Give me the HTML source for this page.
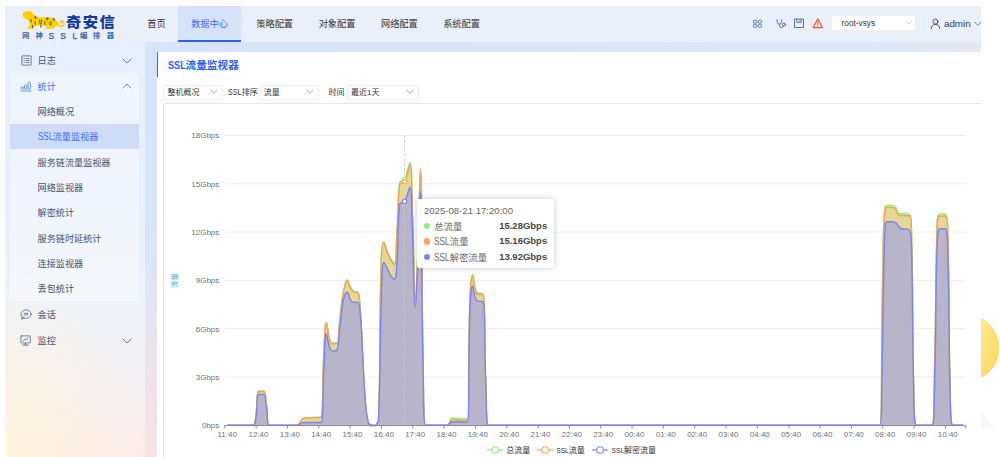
<!DOCTYPE html>
<html lang="zh-CN">
<head>
<meta charset="utf-8">
<title>SSL流量监视器</title>
<style>
html,body{margin:0;padding:0;}
body{width:1000px;height:457px;overflow:hidden;background:#fff;position:relative;
  font-family:"Liberation Sans","Noto Sans CJK SC",sans-serif;color:#333;}
*{box-sizing:border-box;}
.abs{position:absolute;}
#page{position:absolute;left:5px;top:6px;width:976px;height:451px;overflow:hidden;
  background:linear-gradient(to bottom,#d5e3fb 0%,#d8e4fa 42%,#e2e4f4 65%,#f0e2ea 82%,#f5e3e5 100%);}
/* coordinates inside #page are offset by (-5,-6) ; we use a wrapper shifted back */
#w{position:absolute;left:-5px;top:-6px;width:1000px;height:457px;}
#header{left:5px;top:6px;width:976px;height:35.7px;background:#e9f0fa;}
#sidebar{left:5px;top:41.7px;width:140.4px;height:416px;background:radial-gradient(ellipse 150px 190px at 0% 100%,rgba(255,245,222,.95) 0%,rgba(255,245,222,0) 100%),linear-gradient(to bottom,#e6effc 0%,#e9f0fc 40%,#eff3fa 66%,#f5f0f3 84%,#fbeae9 100%);}
#group{left:10.2px;top:73.2px;width:129.3px;height:228.3px;background:rgba(255,255,255,.36);}
#sel{left:10.2px;top:124.1px;width:129.3px;height:25.1px;background:#cfdcf7;}
.mi{position:absolute;left:37.6px;height:25.33px;line-height:27.6px;font-size:9.12px;color:#445170;white-space:nowrap;}
.mi.blue{color:#3a6cf0;}
.nav{position:absolute;top:6px;height:35.7px;line-height:36.6px;font-size:9.2px;color:#333;white-space:nowrap;}
#tab{left:178.2px;top:6px;width:62.4px;height:35.7px;background:#d6e2f8;border-bottom:2.1px solid #2e62e0;}
#panel{left:156.8px;top:52.2px;width:830px;height:410px;background:#fff;border-top-left-radius:3px;}
#bar{left:156.8px;top:52.2px;width:1.5px;height:25px;background:#2e62e0;border-top-left-radius:2px;}
#title{left:167.7px;top:56.6px;font-size:10.67px;font-weight:bold;color:#2f63e3;line-height:16px;white-space:nowrap;}
.sb{position:absolute;top:85px;height:14.8px;border:0.7px solid #e9eef5;border-radius:1.5px;background:#fff;}
.st{position:absolute;top:85.4px;height:14.3px;line-height:16.2px;font-size:8px;color:#333;white-space:nowrap;}
#cbox{left:163px;top:103px;width:830px;height:360px;border:0.8px solid #e4e6ea;border-radius:2px;background:#fff;}
.chart{position:absolute;left:0;top:0;}
.ax{font-size:8px;fill:#6e7079;font-family:"Liberation Sans",sans-serif;}
.cjk{font-family:"Liberation Sans","Noto Sans CJK SC",sans-serif;}
#tip{left:417.3px;top:198.7px;width:136.3px;height:69.6px;background:#fff;border-radius:3px;
  box-shadow:0 0 6px rgba(0,0,0,.22);}
#tip .d{position:absolute;left:6.6px;top:6.3px;font-size:9.6px;line-height:12px;color:#666;white-space:nowrap;}
#tip .r{position:absolute;left:0;width:100%;height:15.6px;line-height:15.6px;font-size:9.33px;color:#666;white-space:nowrap;}
#tip .dot{position:absolute;left:6.4px;top:5px;width:6.2px;height:6.2px;border-radius:50%;}
#tip .l{position:absolute;left:17px;top:1.8px;}
#tip .v{position:absolute;right:6.4px;font-weight:bold;color:#464646;font-size:9.5px;}
.lat{display:inline-block;line-height:1;transform:scale(.88,1.1);transform-origin:0 88%;margin-right:-.225em;}
.lt8{font-size:8.4px;font-weight:normal;color:#2f5aa8;-webkit-text-stroke:.25px #2f5aa8;}
#hsel{left:831.8px;top:16.1px;width:83.3px;height:13.8px;background:#fff;border-radius:2px;}
#hseltxt{left:841.5px;top:16.1px;height:13.8px;line-height:15.8px;font-size:8.3px;color:#333;}
#admin{left:943.9px;top:16.2px;line-height:16px;font-size:9.9px;color:#2f3f66;}
</style>
</head>
<body>
<div id="page"><div id="w">

<!-- header -->
<div id="header" class="abs"></div>
<div id="tab" class="abs"></div>
<div class="abs" style="left:242.1px;top:17px;width:.7px;height:10.2px;background:#dbe2ee"></div>

<!-- logo -->
<svg class="abs" style="left:18px;top:7px" width="55" height="25" viewBox="0 0 1000 455">
  <path d="M88,118 C100,98 150,78 200,70 C245,80 272,112 300,150 C340,182 400,196 470,192 C530,184 600,182 650,198 C690,232 712,270 722,300 L700,345 C670,362 648,378 640,396 L490,396 C494,376 515,360 545,350 C500,346 400,344 335,342 C305,356 294,376 290,396 L165,396 C168,372 190,352 216,346 C222,320 214,290 196,258 C178,232 160,216 150,214 C128,212 108,204 100,190 C92,170 86,140 88,118 Z" fill="#ffcf00"/>
  <path d="M700,268 C716,316 748,350 786,352 C826,352 846,318 836,290 C828,262 796,250 778,264 C768,274 772,290 786,290" fill="none" stroke="#ffcf00" stroke-width="30" stroke-linecap="round"/>
  <g fill="none" stroke="#1a3f8c" stroke-width="15">
    <ellipse cx="316" cy="190" rx="11" ry="22"/><ellipse cx="534" cy="216" rx="12" ry="24"/>
    <ellipse cx="592" cy="298" rx="16" ry="30"/><ellipse cx="652" cy="228" rx="10" ry="22"/>
    <path d="M394,228 V290 C394,306 428,306 428,290 V228"/>
    <path d="M238,222 V282 M312,262 V322 M262,326 V384 M416,318 V378 M488,258 V322"/>
  </g>
</svg>
<div class="abs" style="left:66.4px;top:11.6px;font-size:14.2px;line-height:21px;font-weight:900;color:#10399b;letter-spacing:1.35px;white-space:nowrap;transform:scaleX(1.075);transform-origin:0 0;">奇安信</div>
<div class="abs" id="sub" style="left:0;top:31px;height:10px;font-size:7.4px;line-height:10px;font-weight:700;color:#3b66b2;white-space:nowrap;">
  <span class="abs" style="left:22.1px">网</span><span class="abs" style="left:35.5px">神</span><span class="abs lt8" style="left:48.5px">S</span><span class="abs lt8" style="left:60.3px">S</span><span class="abs lt8" style="left:72.5px">L</span><span class="abs" style="left:80.0px">编</span><span class="abs" style="left:92.8px">排</span><span class="abs" style="left:106.7px">器</span>
</div>

<!-- nav -->
<div class="nav" style="left:147.3px">首页</div>
<div class="nav" style="left:191.3px;color:#3d6be8">数据中心</div>
<div class="nav" style="left:256.3px">策略配置</div>
<div class="nav" style="left:318.7px">对象配置</div>
<div class="nav" style="left:381px">网络配置</div>
<div class="nav" style="left:443.2px">系统配置</div>

<!-- header icons -->
<svg class="abs" style="left:752px;top:18px" width="12" height="12" viewBox="0 0 12 12" fill="none" stroke="#3f5a96" stroke-width=".85">
  <rect x="1.4" y="2.2" width="3.4" height="3" rx="1.1"/><rect x="6.2" y="2.2" width="3.4" height="3" rx="1.1"/>
  <rect x="1.4" y="6.4" width="3.4" height="3" rx="1.1"/><rect x="6.2" y="6.4" width="3.4" height="3" rx="1.1"/>
</svg>
<svg class="abs" style="left:775px;top:18px" width="12" height="12" viewBox="0 0 12 12" fill="none" stroke="#3f5a96" stroke-width=".85" stroke-linecap="round">
  <path d="M2.2,1.8 V3.6 C2.2,5.2 3.4,6 4.4,6 C5.4,6 6.6,5.2 6.6,3.6 V1.8"/>
  <path d="M4.4,6 V7.2 C4.4,8.8 5.4,9.6 6.6,9.6 C7.6,9.6 8.3,9 8.5,8.2"/>
  <circle cx="8.9" cy="6.6" r="1.5"/>
</svg>
<svg class="abs" style="left:793px;top:17px" width="12" height="12" viewBox="0 0 12 12" fill="none" stroke="#3f5a96" stroke-width=".85">
  <path d="M1.5,2 H10.5 V10.5 H1.5 Z"/><path d="M3.8,2 V5.4 H8.2 V2"/><path d="M6.8,3 V4.4"/>
</svg>
<svg class="abs" style="left:811px;top:17px" width="14" height="13" viewBox="0 0 14 13" fill="none" stroke="#ff4d1a" stroke-width="1.1" stroke-linejoin="round" stroke-linecap="round">
  <path d="M6.8,1.7 L11.4,10.6 H2.2 Z"/><path d="M6.8,4.8 V7.6"/><path d="M6.8,9 V9.1"/>
</svg>
<div id="hsel" class="abs"></div>
<div id="hseltxt" class="abs">root-vsys</div>
<svg class="abs" style="left:905px;top:20px" width="8" height="6" viewBox="0 0 8 6" fill="none" stroke="#c0c4cc" stroke-width=".8"><path d="M.6,.9 L3.9,4.3 L7.2,.9"/></svg>
<div class="abs" style="left:923.2px;top:19.5px;width:.7px;height:9.3px;background:#dbe2ee"></div>
<svg class="abs" style="left:930px;top:17.5px" width="11" height="12" viewBox="0 0 11 12" fill="none" stroke="#2f3f66" stroke-width=".85" stroke-linecap="round">
  <circle cx="5.5" cy="3.6" r="2.5"/><path d="M1.2,10.6 C1.4,7.8 3.2,6.4 5.5,6.4 C7.8,6.4 9.6,7.8 9.8,10.6"/>
</svg>
<div id="admin" class="abs">admin</div>
<svg class="abs" style="left:973.6px;top:20.5px" width="8" height="6" viewBox="0 0 8 6" fill="none" stroke="#5b6a8c" stroke-width=".8"><path d="M.4,.9 L3.8,4.4 L7.2,.9"/></svg>

<!-- top strip gradient (between header and panel) -->
<div class="abs" style="left:145.4px;top:41.7px;width:835.6px;height:10.5px;background:linear-gradient(to right,#d7e4fb 0%,#dae5fa 50%,#dde8f7 90%,#e6e8ef 100%)"></div>

<!-- sidebar -->
<div id="sidebar" class="abs"></div>
<div id="group" class="abs"></div>
<div id="sel" class="abs"></div>

<svg class="abs" style="left:20.5px;top:55.3px" width="11" height="11" viewBox="0 0 11 11" fill="none" stroke="#4a5878" stroke-width=".75">
  <rect x=".9" y=".9" width="9.2" height="9.2" rx=".5"/><path d="M2.7,3.5H3.7M4.6,3.5H8.4M2.7,5.5H3.7M4.6,5.5H8.4M2.7,7.5H3.7M4.6,7.5H8.4"/>
</svg>
<div class="mi" style="top:48.3px">日志</div>
<svg class="abs" style="left:121.6px;top:58.4px" width="10" height="6" viewBox="0 0 10 6" fill="none" stroke="#5b6a8c" stroke-width=".9"><path d="M.6,.7 L5,5 L9.4,.7"/></svg>

<svg class="abs" style="left:20.3px;top:80.6px" width="12" height="11" viewBox="0 0 12 11" fill="none" stroke="#4a76ee" stroke-width=".75">
  <circle cx="2.3" cy="7.1" r="1.3"/><rect x="4.5" y="3.6" width="2.4" height="4.8" rx="1.2"/><rect x="8" y="1.2" width="2.4" height="7.2" rx="1.2"/><path d="M.5,10H11.4"/>
</svg>
<div class="mi blue" style="top:73.6px">统计</div>
<svg class="abs" style="left:121.6px;top:83.2px" width="10" height="6" viewBox="0 0 10 6" fill="none" stroke="#5078ea" stroke-width=".9"><path d="M.6,5.3 L5,1 L9.4,5.3"/></svg>

<div class="mi" style="top:99px">网络概况</div>
<div class="mi blue" style="top:124.3px"><span class="lat">SSL</span>流量监视器</div>
<div class="mi" style="top:149.6px">服务链流量监视器</div>
<div class="mi" style="top:175px">网络监视器</div>
<div class="mi" style="top:200.3px">解密统计</div>
<div class="mi" style="top:225.6px">服务链时延统计</div>
<div class="mi" style="top:251px">连接监视器</div>
<div class="mi" style="top:276.3px">丢包统计</div>

<svg class="abs" style="left:20.4px;top:309.4px" width="12" height="11" viewBox="0 0 12 11" fill="none" stroke="#4a5878" stroke-width=".72" stroke-linecap="round">
  <ellipse cx="6" cy="5.1" rx="5.1" ry="4.2"/><path d="M2.4,8.2 L1.3,10.2 L4.2,9"/><path d="M4.2,4.4H7.8M4.2,5.9H7.8"/>
</svg>
<div class="mi" style="top:302.4px">会话</div>

<svg class="abs" style="left:20.4px;top:334.6px" width="12" height="11" viewBox="0 0 12 11" fill="none" stroke="#4a5878" stroke-width=".72" stroke-linecap="round">
  <rect x=".9" y=".9" width="9.4" height="7" rx=".4"/><path d="M5.6,7.9V10M2.6,10.1H8.6"/><path d="M3,6 L5,4.2 L6,5 L8.4,2.6"/>
</svg>
<div class="mi" style="top:327.7px">监控</div>
<svg class="abs" style="left:121.6px;top:338px" width="10" height="6" viewBox="0 0 10 6" fill="none" stroke="#5b6a8c" stroke-width=".9"><path d="M.6,.7 L5,5 L9.4,.7"/></svg>

<!-- main panel -->
<div id="panel" class="abs"></div>
<div id="bar" class="abs"></div>
<div id="title" class="abs"><span class="lat" style="transform:scale(.86,1.08);margin-right:-.27em">SSL</span>流量监视器</div>

<div class="sb" style="left:163px;width:60px"></div>
<div class="st" style="left:167.6px">整机概况</div>
<svg class="abs" style="left:210px;top:89.4px" width="8" height="6" viewBox="0 0 8 6" fill="none" stroke="#8e8c8c" stroke-width=".8"><path d="M.3,.9 L3.9,4.2 L7.5,.9"/></svg>
<div class="st" style="left:228.4px"><span class="lat">SSL</span>排序</div>
<div class="sb" style="left:260px;width:58.6px"></div>
<div class="st" style="left:263.8px">流量</div>
<svg class="abs" style="left:306.2px;top:89.4px" width="8" height="6" viewBox="0 0 8 6" fill="none" stroke="#8e8c8c" stroke-width=".8"><path d="M.3,.9 L3.9,4.2 L7.5,.9"/></svg>
<div class="st" style="left:328.6px">时间</div>
<div class="sb" style="left:347px;width:72px"></div>
<div class="st" style="left:351px">最近1天</div>
<svg class="abs" style="left:406px;top:89.4px" width="8" height="6" viewBox="0 0 8 6" fill="none" stroke="#8e8c8c" stroke-width=".8"><path d="M.3,.9 L3.9,4.2 L7.5,.9"/></svg>

<div id="cbox" class="abs"></div>
<svg class="chart" width="1000" height="457" viewBox="0 0 1000 457">
<line x1="224.8" x2="965.8" y1="135.50" y2="135.50" stroke="#dfe5f1" stroke-width="0.7"/>
<line x1="224.8" x2="965.8" y1="183.80" y2="183.80" stroke="#dfe5f1" stroke-width="0.7"/>
<line x1="224.8" x2="965.8" y1="232.10" y2="232.10" stroke="#dfe5f1" stroke-width="0.7"/>
<line x1="224.8" x2="965.8" y1="280.40" y2="280.40" stroke="#dfe5f1" stroke-width="0.7"/>
<line x1="224.8" x2="965.8" y1="328.70" y2="328.70" stroke="#dfe5f1" stroke-width="0.7"/>
<line x1="224.8" x2="965.8" y1="377.00" y2="377.00" stroke="#dfe5f1" stroke-width="0.7"/>
<text x="219.3" y="138.40" text-anchor="end" class="ax">18Gbps</text>
<text x="219.3" y="186.70" text-anchor="end" class="ax">15Gbps</text>
<text x="219.3" y="235.00" text-anchor="end" class="ax">12Gbps</text>
<text x="219.3" y="283.30" text-anchor="end" class="ax">9Gbps</text>
<text x="219.3" y="331.60" text-anchor="end" class="ax">6Gbps</text>
<text x="219.3" y="379.90" text-anchor="end" class="ax">3Gbps</text>
<text x="219.3" y="428.20" text-anchor="end" class="ax">0bps</text>
<line x1="404.6" x2="404.6" y1="135.5" y2="425.3" stroke="#b3b5bb" stroke-width="0.7" stroke-dasharray="2.6,2"/>
<path d="M227.20,425.30C227.20,425.30 228.51,425.30 229.81,425.30C231.12,425.30 231.12,425.30 232.42,425.30C233.73,425.30 233.73,425.30 235.03,425.30C236.34,425.30 236.34,425.30 237.64,425.30C238.95,425.30 238.95,425.30 240.25,425.30C241.56,425.30 241.56,425.30 242.86,425.30C244.17,425.30 244.17,425.30 245.48,425.30C246.78,425.30 246.78,425.30 248.09,425.30C249.39,425.30 249.39,425.30 250.70,425.30C252.00,425.30 252.78,425.30 253.31,425.30C255.40,425.30 255.14,420.36 255.92,415.23C257.75,403.26 256.17,391.09 258.53,391.09C258.78,391.09 259.84,391.09 261.14,391.09C262.45,391.09 263.33,391.09 263.75,391.09C265.94,391.09 265.34,397.69 266.36,404.38C267.95,414.80 266.65,425.30 268.97,425.30C269.26,425.30 270.28,425.30 271.58,425.30C272.89,425.30 272.89,425.30 274.19,425.30C275.50,425.30 275.50,425.30 276.81,425.30C278.11,425.30 278.11,425.30 279.42,425.30C280.72,425.30 280.72,425.30 282.03,425.30C283.33,425.30 283.33,425.30 284.64,425.30C285.94,425.30 285.94,425.30 287.25,425.30C288.55,425.30 288.55,425.30 289.86,425.30C291.17,425.30 291.17,425.30 292.47,425.30C293.78,425.30 293.79,425.30 295.08,425.30C296.40,425.30 296.66,425.30 297.69,424.84C299.27,424.14 299.01,423.32 300.30,421.77C301.63,420.18 301.34,419.67 302.91,418.56C303.95,417.83 304.20,417.96 305.52,417.83C306.81,417.71 306.83,417.76 308.14,417.71C309.44,417.65 309.44,417.67 310.75,417.62C312.05,417.57 312.05,417.56 313.36,417.51C314.66,417.47 314.66,417.48 315.97,417.43C317.27,417.39 317.28,417.42 318.58,417.34C319.89,417.26 321.08,417.34 321.19,417.11C323.69,411.73 322.10,386.24 323.80,355.41C324.71,338.84 324.57,322.32 326.41,322.32C327.18,322.32 327.34,329.21 329.02,335.89C329.95,339.58 329.69,343.07 331.63,343.07C332.30,343.07 332.94,343.07 334.24,343.07C335.55,343.07 336.56,343.07 336.86,343.07C339.17,343.07 338.26,333.09 339.47,323.08C340.87,311.49 340.46,311.44 342.08,299.88C343.07,292.74 342.89,292.63 344.69,285.68C345.50,282.52 345.98,279.65 347.30,279.65C348.59,279.65 348.46,282.67 349.91,285.54C351.07,287.85 350.86,288.14 352.52,290.02C353.48,291.11 353.74,291.15 355.13,291.48C356.35,291.77 357.43,291.48 357.74,291.77C360.04,293.90 359.65,301.36 360.35,311.05C362.26,337.36 361.51,337.42 362.96,363.78C364.12,384.62 363.71,384.67 365.57,405.44C366.32,413.77 366.06,414.11 368.19,421.98C368.67,423.77 369.26,423.98 370.80,424.75C371.87,425.29 372.10,425.29 373.41,425.29C374.71,425.29 375.35,425.29 376.02,424.75C377.96,423.17 378.51,421.28 378.63,417.39C381.12,338.19 378.88,337.88 381.24,258.56C381.50,249.94 382.06,241.50 383.85,241.50C384.67,241.50 385.07,245.23 386.46,248.91C387.68,252.13 387.63,252.16 389.07,255.29C390.24,257.83 390.16,257.91 391.68,260.23C392.77,261.89 393.99,263.26 394.29,263.26C396.60,263.26 395.92,248.10 396.90,232.90C398.53,207.85 397.07,207.28 399.51,182.76C399.68,181.07 400.70,181.43 402.13,180.48C403.31,179.69 404.07,180.44 404.74,179.27C406.69,175.81 406.08,175.25 407.35,171.21C408.69,166.91 409.60,162.58 409.96,162.58C412.21,162.58 411.48,190.80 412.57,219.03C414.09,258.18 413.49,297.35 415.18,297.35C416.10,297.35 416.93,276.06 417.79,254.73C419.54,211.46 419.57,168.16 420.40,168.16C422.18,168.16 421.12,261.19 423.01,354.19C423.73,389.76 423.10,425.30 425.62,425.30C425.72,425.30 426.93,425.30 428.23,425.30C429.54,425.30 429.54,425.30 430.85,425.30C432.15,425.30 432.15,425.30 433.46,425.30C434.76,425.30 434.76,425.30 436.07,425.30C437.37,425.30 437.37,425.30 438.68,425.30C439.98,425.30 439.98,425.30 441.29,425.30C442.59,425.30 442.59,425.30 443.90,425.30C445.20,425.30 445.40,425.30 446.51,425.30C448.01,425.30 448.08,424.33 449.12,422.94C450.69,420.85 449.98,418.34 451.73,418.34C452.59,418.34 453.04,418.34 454.34,418.34C455.65,418.35 455.65,418.39 456.95,418.44C458.26,418.50 458.26,418.50 459.56,418.55C460.87,418.61 460.87,418.60 462.17,418.65C463.48,418.71 463.48,418.72 464.79,418.77C466.09,418.81 467.34,418.83 467.40,418.83C469.95,418.83 467.80,357.73 470.01,296.75C470.41,285.49 471.03,274.34 472.62,274.34C473.64,274.34 473.31,281.70 475.23,288.61C475.92,291.11 476.10,293.05 477.84,293.17C478.71,293.22 479.15,293.18 480.45,293.22C481.76,293.26 482.99,293.22 483.06,293.32C485.60,296.68 483.89,338.37 485.67,383.37C486.50,404.36 485.83,425.30 488.28,425.30C488.44,425.30 489.59,425.30 490.89,425.30C492.20,425.30 492.20,425.30 493.50,425.30C494.81,425.30 494.81,425.30 496.12,425.30C497.42,425.30 497.42,425.30 498.73,425.30C500.03,425.30 500.03,425.30 501.34,425.30C502.64,425.30 502.64,425.30 503.95,425.30C505.25,425.30 505.25,425.30 506.56,425.30C507.86,425.30 507.86,425.30 509.17,425.30C510.48,425.30 510.48,425.30 511.78,425.30C513.09,425.30 513.09,425.30 514.39,425.30C515.70,425.30 515.70,425.30 517.00,425.30C518.31,425.30 518.31,425.30 519.61,425.30C520.92,425.30 520.92,425.30 522.22,425.30C523.53,425.30 523.53,425.30 524.84,425.30C526.14,425.30 526.14,425.30 527.45,425.30C528.75,425.30 528.75,425.30 530.06,425.30C531.36,425.30 531.36,425.30 532.67,425.30C533.97,425.30 533.97,425.30 535.28,425.30C536.58,425.30 536.58,425.30 537.89,425.30C539.19,425.30 539.19,425.30 540.50,425.30C541.81,425.30 541.81,425.30 543.11,425.30C544.42,425.30 544.42,425.30 545.72,425.30C547.03,425.30 547.03,425.30 548.33,425.30C549.64,425.30 549.64,425.30 550.94,425.30C552.25,425.30 552.25,425.30 553.55,425.30C554.86,425.30 554.86,425.30 556.16,425.30C557.47,425.30 557.47,425.30 558.78,425.30C560.08,425.30 560.08,425.30 561.39,425.30C562.69,425.30 562.69,425.30 564.00,425.30C565.30,425.30 565.30,425.30 566.61,425.30C567.91,425.30 567.91,425.30 569.22,425.30C570.52,425.30 570.52,425.30 571.83,425.30C573.14,425.30 573.14,425.30 574.44,425.30C575.75,425.30 575.75,425.30 577.05,425.30C578.36,425.30 578.36,425.30 579.66,425.30C580.97,425.30 580.97,425.30 582.27,425.30C583.58,425.30 583.58,425.30 584.88,425.30C586.19,425.30 586.19,425.30 587.50,425.30C588.80,425.30 588.80,425.30 590.11,425.30C591.41,425.30 591.41,425.30 592.72,425.30C594.02,425.30 594.02,425.30 595.33,425.30C596.63,425.30 596.63,425.30 597.94,425.30C599.24,425.30 599.24,425.30 600.55,425.30C601.85,425.30 601.85,425.30 603.16,425.30C604.47,425.30 604.47,425.30 605.77,425.30C607.08,425.30 607.08,425.30 608.38,425.30C609.69,425.30 609.69,425.30 610.99,425.30C612.30,425.30 612.30,425.30 613.60,425.30C614.91,425.30 614.91,425.30 616.21,425.30C617.52,425.30 617.52,425.30 618.83,425.30C620.13,425.30 620.13,425.30 621.44,425.30C622.74,425.30 622.74,425.30 624.05,425.30C625.35,425.30 625.35,425.30 626.66,425.30C627.96,425.30 627.96,425.30 629.27,425.30C630.57,425.30 630.57,425.30 631.88,425.30C633.18,425.30 633.18,425.30 634.49,425.30C635.80,425.30 635.80,425.30 637.10,425.30C638.41,425.30 638.41,425.30 639.71,425.30C641.02,425.30 641.02,425.30 642.32,425.30C643.63,425.30 643.63,425.30 644.93,425.30C646.24,425.30 646.24,425.30 647.54,425.30C648.85,425.30 648.85,425.30 650.15,425.30C651.46,425.30 651.46,425.30 652.77,425.30C654.07,425.30 654.07,425.30 655.38,425.30C656.68,425.30 656.68,425.30 657.99,425.30C659.29,425.30 659.29,425.30 660.60,425.30C661.90,425.30 661.90,425.30 663.21,425.30C664.51,425.30 664.51,425.30 665.82,425.30C667.13,425.30 667.13,425.30 668.43,425.30C669.74,425.30 669.74,425.30 671.04,425.30C672.35,425.30 672.35,425.30 673.65,425.30C674.96,425.30 674.96,425.30 676.26,425.30C677.57,425.30 677.57,425.30 678.87,425.30C680.18,425.30 680.18,425.30 681.49,425.30C682.79,425.30 682.79,425.30 684.10,425.30C685.40,425.30 685.40,425.30 686.71,425.30C688.01,425.30 688.01,425.30 689.32,425.30C690.62,425.30 690.62,425.30 691.93,425.30C693.23,425.30 693.23,425.30 694.54,425.30C695.84,425.30 695.84,425.30 697.15,425.30C698.46,425.30 698.46,425.30 699.76,425.30C701.07,425.30 701.07,425.30 702.37,425.30C703.68,425.30 703.68,425.30 704.98,425.30C706.29,425.30 706.29,425.30 707.59,425.30C708.90,425.30 708.90,425.30 710.20,425.30C711.51,425.30 711.51,425.30 712.82,425.30C714.12,425.30 714.12,425.30 715.43,425.30C716.73,425.30 716.73,425.30 718.04,425.30C719.34,425.30 719.34,425.30 720.65,425.30C721.95,425.30 721.95,425.30 723.26,425.30C724.56,425.30 724.56,425.30 725.87,425.30C727.17,425.30 727.17,425.30 728.48,425.30C729.79,425.30 729.79,425.30 731.09,425.30C732.40,425.30 732.40,425.30 733.70,425.30C735.01,425.30 735.01,425.30 736.31,425.30C737.62,425.30 737.62,425.30 738.92,425.30C740.23,425.30 740.23,425.30 741.53,425.30C742.84,425.30 742.84,425.30 744.14,425.30C745.45,425.30 745.45,425.30 746.76,425.30C748.06,425.30 748.06,425.30 749.37,425.30C750.67,425.30 750.67,425.30 751.98,425.30C753.28,425.30 753.28,425.30 754.59,425.30C755.89,425.30 755.89,425.30 757.20,425.30C758.50,425.30 758.50,425.30 759.81,425.30C761.12,425.30 761.12,425.30 762.42,425.30C763.73,425.30 763.73,425.30 765.03,425.30C766.34,425.30 766.34,425.30 767.64,425.30C768.95,425.30 768.95,425.30 770.25,425.30C771.56,425.30 771.56,425.30 772.86,425.30C774.17,425.30 774.17,425.30 775.47,425.30C776.78,425.30 776.78,425.30 778.09,425.30C779.39,425.30 779.39,425.30 780.70,425.30C782.00,425.30 782.00,425.30 783.31,425.30C784.61,425.30 784.61,425.30 785.92,425.30C787.22,425.30 787.22,425.30 788.53,425.30C789.83,425.30 789.83,425.30 791.14,425.30C792.45,425.30 792.45,425.30 793.75,425.30C795.06,425.30 795.06,425.30 796.36,425.30C797.67,425.30 797.67,425.30 798.97,425.30C800.28,425.30 800.28,425.30 801.58,425.30C802.89,425.30 802.89,425.30 804.19,425.30C805.50,425.30 805.50,425.30 806.81,425.30C808.11,425.30 808.11,425.30 809.42,425.30C810.72,425.30 810.72,425.30 812.03,425.30C813.33,425.30 813.33,425.30 814.64,425.30C815.94,425.30 815.94,425.30 817.25,425.30C818.55,425.30 818.55,425.30 819.86,425.30C821.16,425.30 821.16,425.30 822.47,425.30C823.78,425.30 823.78,425.30 825.08,425.30C826.39,425.30 826.39,425.30 827.69,425.30C829.00,425.30 829.00,425.30 830.30,425.30C831.61,425.30 831.61,425.30 832.91,425.30C834.22,425.30 834.22,425.30 835.52,425.30C836.83,425.30 836.83,425.30 838.13,425.30C839.44,425.30 839.44,425.30 840.75,425.30C842.05,425.30 842.05,425.30 843.36,425.30C844.66,425.30 844.66,425.30 845.97,425.30C847.27,425.30 847.27,425.30 848.58,425.30C849.88,425.30 849.88,425.30 851.19,425.30C852.49,425.30 852.49,425.30 853.80,425.30C855.11,425.30 855.11,425.30 856.41,425.30C857.72,425.30 857.72,425.30 859.02,425.30C860.33,425.30 860.33,425.30 861.63,425.30C862.94,425.30 862.94,425.30 864.24,425.30C865.55,425.30 865.55,425.30 866.85,425.30C868.16,425.30 868.16,425.30 869.46,425.30C870.77,425.30 870.77,425.30 872.08,425.30C873.38,425.30 873.38,425.30 874.69,425.30C875.99,425.30 875.99,425.30 877.30,425.30C878.60,425.30 879.86,425.30 879.91,425.30C882.47,425.30 880.90,357.15 882.52,289.01C883.51,247.52 882.60,224.67 885.13,206.04C885.21,205.44 886.42,205.44 887.74,205.44C889.03,205.44 889.05,205.44 890.35,205.44C891.66,205.44 891.78,205.44 892.96,205.44C894.39,205.44 894.67,205.99 895.57,207.23C897.28,209.59 896.41,210.44 898.18,212.64C899.02,213.67 899.44,213.64 900.80,213.70C902.05,213.75 902.10,213.73 903.41,213.75C904.71,213.77 904.71,213.75 906.02,213.77C907.32,213.80 907.96,213.77 908.63,213.85C910.57,214.08 911.13,217.16 911.24,220.92C913.74,309.14 911.59,309.42 913.85,397.80C914.20,411.60 914.07,425.30 916.46,425.30C916.69,425.30 917.77,425.30 919.07,425.30C920.38,425.30 920.38,425.30 921.68,425.30C922.99,425.30 922.99,425.30 924.29,425.30C925.60,425.30 925.60,425.30 926.90,425.30C928.21,425.30 928.21,425.30 929.51,425.30C930.82,425.30 932.02,425.30 932.12,425.29C934.63,425.11 933.91,392.90 934.74,360.49C936.52,290.13 934.85,289.85 937.35,219.75C937.46,216.61 938.11,214.02 939.96,214.02C940.72,214.02 941.26,214.02 942.57,214.02C943.87,214.02 944.86,214.02 945.18,214.02C947.47,214.02 947.54,223.08 947.79,232.31C950.15,318.45 948.07,318.61 950.40,404.76C950.68,415.10 950.69,425.30 953.01,425.30C953.30,425.30 954.32,425.30 955.62,425.30C956.93,425.30 956.93,425.30 958.23,425.30C959.54,425.30 959.54,425.30 960.84,425.30C962.15,425.30 963.45,425.30 963.45,425.30L962.90,425.30L227.20,425.30Z" fill="#e2efb0"/>
<path d="M227.20,425.30C227.20,425.30 228.51,425.30 229.81,425.30C231.12,425.30 231.12,425.30 232.42,425.30C233.73,425.30 233.73,425.30 235.03,425.30C236.34,425.30 236.34,425.30 237.64,425.30C238.95,425.30 238.95,425.30 240.25,425.30C241.56,425.30 241.56,425.30 242.86,425.30C244.17,425.30 244.17,425.30 245.48,425.30C246.78,425.30 246.78,425.30 248.09,425.30C249.39,425.30 249.39,425.30 250.70,425.30C252.00,425.30 252.78,425.30 253.31,425.30C255.39,425.30 255.14,420.41 255.92,415.32C257.75,403.46 256.17,391.40 258.53,391.40C258.79,391.40 259.84,391.40 261.14,391.40C262.45,391.40 263.33,391.40 263.75,391.40C265.94,391.40 265.34,397.94 266.36,404.57C267.95,414.89 266.65,425.30 268.97,425.30C269.26,425.30 270.28,425.30 271.58,425.30C272.89,425.30 272.89,425.30 274.19,425.30C275.50,425.30 275.50,425.30 276.81,425.30C278.11,425.30 278.11,425.30 279.42,425.30C280.72,425.30 280.72,425.30 282.03,425.30C283.33,425.30 283.33,425.30 284.64,425.30C285.94,425.30 285.94,425.30 287.25,425.30C288.55,425.30 288.55,425.30 289.86,425.30C291.17,425.30 291.17,425.30 292.47,425.30C293.78,425.30 293.79,425.30 295.08,425.30C296.40,425.30 296.65,425.30 297.69,424.84C299.26,424.15 299.01,423.34 300.30,421.80C301.63,420.23 301.34,419.72 302.91,418.62C303.95,417.90 304.20,418.03 305.52,417.90C306.81,417.77 306.83,417.83 308.14,417.77C309.44,417.72 309.44,417.74 310.75,417.69C312.05,417.64 312.05,417.63 313.36,417.58C314.66,417.54 314.66,417.55 315.97,417.50C317.27,417.46 317.28,417.49 318.58,417.41C319.89,417.33 321.08,417.41 321.19,417.19C323.69,411.90 322.10,386.58 323.80,356.03C324.71,339.61 324.57,323.23 326.41,323.23C327.18,323.23 327.34,330.06 329.02,336.68C329.95,340.35 329.69,343.80 331.63,343.80C332.30,343.80 332.94,343.80 334.24,343.80C335.55,343.80 336.55,343.80 336.86,343.80C339.16,343.80 338.26,333.91 339.47,323.99C340.87,312.51 340.46,312.45 342.08,301.00C343.07,293.92 342.89,293.81 344.69,286.93C345.51,283.79 345.98,280.95 347.30,280.95C348.59,280.95 348.46,283.94 349.91,286.79C351.07,289.08 350.87,289.36 352.52,291.23C353.48,292.31 353.74,292.35 355.13,292.67C356.35,292.96 357.43,292.67 357.74,292.96C360.04,295.06 359.65,302.46 360.35,312.07C362.26,338.14 361.51,338.21 362.96,364.33C364.12,384.98 363.71,385.03 365.57,405.62C366.32,413.87 366.06,414.22 368.19,422.01C368.67,423.79 369.26,423.99 370.80,424.76C371.87,425.29 372.10,425.29 373.41,425.29C374.71,425.29 375.35,425.29 376.02,424.76C377.96,423.20 378.51,421.32 378.63,417.46C381.12,338.97 378.88,338.66 381.24,260.05C381.50,251.50 382.06,243.14 383.85,243.14C384.67,243.14 385.07,246.84 386.46,250.48C387.68,253.68 387.63,253.71 389.07,256.81C390.24,259.32 390.16,259.41 391.68,261.71C392.77,263.35 393.99,264.71 394.29,264.71C396.60,264.71 395.92,249.69 396.90,234.62C398.53,209.79 397.07,209.22 399.51,184.92C399.68,183.24 400.70,183.61 402.13,182.66C403.31,181.88 404.07,182.63 404.74,181.46C406.68,178.04 406.08,177.48 407.35,173.48C408.69,169.22 409.60,164.93 409.96,164.93C412.21,164.93 411.48,192.89 412.57,220.87C414.09,259.67 413.49,298.49 415.18,298.49C416.10,298.49 416.93,277.39 417.79,256.25C419.54,213.37 419.57,170.45 420.40,170.45C422.18,170.45 421.12,262.65 423.01,354.82C423.73,390.08 423.11,425.30 425.62,425.30C425.72,425.30 426.93,425.30 428.23,425.30C429.54,425.30 429.54,425.30 430.85,425.30C432.15,425.30 432.15,425.30 433.46,425.30C434.76,425.30 434.76,425.30 436.07,425.30C437.37,425.30 437.37,425.30 438.68,425.30C439.98,425.30 439.98,425.30 441.29,425.30C442.59,425.30 442.59,425.30 443.90,425.30C445.20,425.30 445.33,425.30 446.51,425.30C447.94,425.30 448.02,424.62 449.12,423.51C450.63,421.99 450.10,420.03 451.73,420.03C452.71,420.03 453.04,420.03 454.34,420.03C455.65,420.03 455.65,420.07 456.95,420.11C458.26,420.15 458.26,420.15 459.56,420.19C460.87,420.23 460.87,420.23 462.17,420.27C463.48,420.31 463.48,420.32 464.79,420.35C466.09,420.38 467.34,420.40 467.40,420.40C469.95,420.40 467.80,359.09 470.01,297.90C470.41,286.73 471.03,275.69 472.62,275.69C473.64,275.69 473.31,282.99 475.23,289.83C475.92,292.31 476.10,294.23 477.84,294.34C478.71,294.40 479.15,294.36 480.45,294.40C481.76,294.44 482.99,294.40 483.06,294.50C485.60,297.80 483.89,339.14 485.67,383.75C486.50,404.55 485.83,425.30 488.28,425.30C488.44,425.30 489.59,425.30 490.89,425.30C492.20,425.30 492.20,425.30 493.50,425.30C494.81,425.30 494.81,425.30 496.12,425.30C497.42,425.30 497.42,425.30 498.73,425.30C500.03,425.30 500.03,425.30 501.34,425.30C502.64,425.30 502.64,425.30 503.95,425.30C505.25,425.30 505.25,425.30 506.56,425.30C507.86,425.30 507.86,425.30 509.17,425.30C510.48,425.30 510.48,425.30 511.78,425.30C513.09,425.30 513.09,425.30 514.39,425.30C515.70,425.30 515.70,425.30 517.00,425.30C518.31,425.30 518.31,425.30 519.61,425.30C520.92,425.30 520.92,425.30 522.22,425.30C523.53,425.30 523.53,425.30 524.84,425.30C526.14,425.30 526.14,425.30 527.45,425.30C528.75,425.30 528.75,425.30 530.06,425.30C531.36,425.30 531.36,425.30 532.67,425.30C533.97,425.30 533.97,425.30 535.28,425.30C536.58,425.30 536.58,425.30 537.89,425.30C539.19,425.30 539.19,425.30 540.50,425.30C541.81,425.30 541.81,425.30 543.11,425.30C544.42,425.30 544.42,425.30 545.72,425.30C547.03,425.30 547.03,425.30 548.33,425.30C549.64,425.30 549.64,425.30 550.94,425.30C552.25,425.30 552.25,425.30 553.55,425.30C554.86,425.30 554.86,425.30 556.16,425.30C557.47,425.30 557.47,425.30 558.78,425.30C560.08,425.30 560.08,425.30 561.39,425.30C562.69,425.30 562.69,425.30 564.00,425.30C565.30,425.30 565.30,425.30 566.61,425.30C567.91,425.30 567.91,425.30 569.22,425.30C570.52,425.30 570.52,425.30 571.83,425.30C573.14,425.30 573.14,425.30 574.44,425.30C575.75,425.30 575.75,425.30 577.05,425.30C578.36,425.30 578.36,425.30 579.66,425.30C580.97,425.30 580.97,425.30 582.27,425.30C583.58,425.30 583.58,425.30 584.88,425.30C586.19,425.30 586.19,425.30 587.50,425.30C588.80,425.30 588.80,425.30 590.11,425.30C591.41,425.30 591.41,425.30 592.72,425.30C594.02,425.30 594.02,425.30 595.33,425.30C596.63,425.30 596.63,425.30 597.94,425.30C599.24,425.30 599.24,425.30 600.55,425.30C601.85,425.30 601.85,425.30 603.16,425.30C604.47,425.30 604.47,425.30 605.77,425.30C607.08,425.30 607.08,425.30 608.38,425.30C609.69,425.30 609.69,425.30 610.99,425.30C612.30,425.30 612.30,425.30 613.60,425.30C614.91,425.30 614.91,425.30 616.21,425.30C617.52,425.30 617.52,425.30 618.83,425.30C620.13,425.30 620.13,425.30 621.44,425.30C622.74,425.30 622.74,425.30 624.05,425.30C625.35,425.30 625.35,425.30 626.66,425.30C627.96,425.30 627.96,425.30 629.27,425.30C630.57,425.30 630.57,425.30 631.88,425.30C633.18,425.30 633.18,425.30 634.49,425.30C635.80,425.30 635.80,425.30 637.10,425.30C638.41,425.30 638.41,425.30 639.71,425.30C641.02,425.30 641.02,425.30 642.32,425.30C643.63,425.30 643.63,425.30 644.93,425.30C646.24,425.30 646.24,425.30 647.54,425.30C648.85,425.30 648.85,425.30 650.15,425.30C651.46,425.30 651.46,425.30 652.77,425.30C654.07,425.30 654.07,425.30 655.38,425.30C656.68,425.30 656.68,425.30 657.99,425.30C659.29,425.30 659.29,425.30 660.60,425.30C661.90,425.30 661.90,425.30 663.21,425.30C664.51,425.30 664.51,425.30 665.82,425.30C667.13,425.30 667.13,425.30 668.43,425.30C669.74,425.30 669.74,425.30 671.04,425.30C672.35,425.30 672.35,425.30 673.65,425.30C674.96,425.30 674.96,425.30 676.26,425.30C677.57,425.30 677.57,425.30 678.87,425.30C680.18,425.30 680.18,425.30 681.49,425.30C682.79,425.30 682.79,425.30 684.10,425.30C685.40,425.30 685.40,425.30 686.71,425.30C688.01,425.30 688.01,425.30 689.32,425.30C690.62,425.30 690.62,425.30 691.93,425.30C693.23,425.30 693.23,425.30 694.54,425.30C695.84,425.30 695.84,425.30 697.15,425.30C698.46,425.30 698.46,425.30 699.76,425.30C701.07,425.30 701.07,425.30 702.37,425.30C703.68,425.30 703.68,425.30 704.98,425.30C706.29,425.30 706.29,425.30 707.59,425.30C708.90,425.30 708.90,425.30 710.20,425.30C711.51,425.30 711.51,425.30 712.82,425.30C714.12,425.30 714.12,425.30 715.43,425.30C716.73,425.30 716.73,425.30 718.04,425.30C719.34,425.30 719.34,425.30 720.65,425.30C721.95,425.30 721.95,425.30 723.26,425.30C724.56,425.30 724.56,425.30 725.87,425.30C727.17,425.30 727.17,425.30 728.48,425.30C729.79,425.30 729.79,425.30 731.09,425.30C732.40,425.30 732.40,425.30 733.70,425.30C735.01,425.30 735.01,425.30 736.31,425.30C737.62,425.30 737.62,425.30 738.92,425.30C740.23,425.30 740.23,425.30 741.53,425.30C742.84,425.30 742.84,425.30 744.14,425.30C745.45,425.30 745.45,425.30 746.76,425.30C748.06,425.30 748.06,425.30 749.37,425.30C750.67,425.30 750.67,425.30 751.98,425.30C753.28,425.30 753.28,425.30 754.59,425.30C755.89,425.30 755.89,425.30 757.20,425.30C758.50,425.30 758.50,425.30 759.81,425.30C761.12,425.30 761.12,425.30 762.42,425.30C763.73,425.30 763.73,425.30 765.03,425.30C766.34,425.30 766.34,425.30 767.64,425.30C768.95,425.30 768.95,425.30 770.25,425.30C771.56,425.30 771.56,425.30 772.86,425.30C774.17,425.30 774.17,425.30 775.47,425.30C776.78,425.30 776.78,425.30 778.09,425.30C779.39,425.30 779.39,425.30 780.70,425.30C782.00,425.30 782.00,425.30 783.31,425.30C784.61,425.30 784.61,425.30 785.92,425.30C787.22,425.30 787.22,425.30 788.53,425.30C789.83,425.30 789.83,425.30 791.14,425.30C792.45,425.30 792.45,425.30 793.75,425.30C795.06,425.30 795.06,425.30 796.36,425.30C797.67,425.30 797.67,425.30 798.97,425.30C800.28,425.30 800.28,425.30 801.58,425.30C802.89,425.30 802.89,425.30 804.19,425.30C805.50,425.30 805.50,425.30 806.81,425.30C808.11,425.30 808.11,425.30 809.42,425.30C810.72,425.30 810.72,425.30 812.03,425.30C813.33,425.30 813.33,425.30 814.64,425.30C815.94,425.30 815.94,425.30 817.25,425.30C818.55,425.30 818.55,425.30 819.86,425.30C821.16,425.30 821.16,425.30 822.47,425.30C823.78,425.30 823.78,425.30 825.08,425.30C826.39,425.30 826.39,425.30 827.69,425.30C829.00,425.30 829.00,425.30 830.30,425.30C831.61,425.30 831.61,425.30 832.91,425.30C834.22,425.30 834.22,425.30 835.52,425.30C836.83,425.30 836.83,425.30 838.13,425.30C839.44,425.30 839.44,425.30 840.75,425.30C842.05,425.30 842.05,425.30 843.36,425.30C844.66,425.30 844.66,425.30 845.97,425.30C847.27,425.30 847.27,425.30 848.58,425.30C849.88,425.30 849.88,425.30 851.19,425.30C852.49,425.30 852.49,425.30 853.80,425.30C855.11,425.30 855.11,425.30 856.41,425.30C857.72,425.30 857.72,425.30 859.02,425.30C860.33,425.30 860.33,425.30 861.63,425.30C862.94,425.30 862.94,425.30 864.24,425.30C865.55,425.30 865.55,425.30 866.85,425.30C868.16,425.30 868.16,425.30 869.46,425.30C870.77,425.30 870.77,425.30 872.08,425.30C873.38,425.30 873.38,425.30 874.69,425.30C875.99,425.30 875.99,425.30 877.30,425.30C878.60,425.30 879.86,425.30 879.91,425.30C882.47,425.30 880.90,357.76 882.52,290.23C883.51,249.10 882.60,226.30 885.13,208.00C885.21,207.40 886.42,207.40 887.74,207.40C889.03,207.40 889.05,207.40 890.35,207.40C891.66,207.40 891.78,207.40 892.96,207.40C894.39,207.40 894.67,207.94 895.57,209.18C897.28,211.51 896.41,212.36 898.18,214.53C899.02,215.56 899.44,215.53 900.80,215.59C902.05,215.64 902.10,215.62 903.41,215.64C904.71,215.66 904.71,215.64 906.02,215.66C907.32,215.68 907.95,215.66 908.63,215.74C910.56,215.96 911.13,219.02 911.24,222.75C913.74,310.17 911.59,310.45 913.85,398.05C914.20,411.73 914.08,425.30 916.46,425.30C916.69,425.30 917.77,425.30 919.07,425.30C920.38,425.30 920.38,425.30 921.68,425.30C922.99,425.30 922.99,425.30 924.29,425.30C925.60,425.30 925.60,425.30 926.90,425.30C928.21,425.30 928.21,425.30 929.51,425.30C930.82,425.30 932.02,425.30 932.12,425.29C934.63,425.12 933.91,393.19 934.74,361.07C936.52,291.34 934.85,291.05 937.35,221.59C937.46,218.47 938.12,215.90 939.96,215.90C940.73,215.90 941.26,215.90 942.57,215.90C943.87,215.90 944.85,215.90 945.18,215.90C947.46,215.90 947.54,224.88 947.79,234.03C950.15,319.40 948.07,319.56 950.40,404.94C950.68,415.19 950.70,425.30 953.01,425.30C953.31,425.30 954.32,425.30 955.62,425.30C956.93,425.30 956.93,425.30 958.23,425.30C959.54,425.30 959.54,425.30 960.84,425.30C962.15,425.30 963.45,425.30 963.45,425.30L962.90,425.30L227.20,425.30Z" fill="#e6d796"/>
<path d="M227.20,425.30C227.20,425.30 228.51,425.30 229.81,425.30C231.12,425.30 231.12,425.30 232.42,425.30C233.73,425.30 233.73,425.30 235.03,425.30C236.34,425.30 236.34,425.30 237.64,425.30C238.95,425.30 238.95,425.30 240.25,425.30C241.56,425.30 241.56,425.30 242.86,425.30C244.17,425.30 244.17,425.30 245.48,425.30C246.78,425.30 246.78,425.30 248.09,425.30C249.39,425.30 249.39,425.30 250.70,425.30C252.00,425.30 252.64,425.30 253.31,425.30C255.25,425.30 255.29,421.88 255.92,418.15C257.90,406.48 256.18,395.42 258.53,394.50C258.79,394.40 259.83,394.40 261.14,394.40C262.45,394.40 263.30,394.40 263.75,394.40C265.91,394.40 265.33,400.41 266.36,406.51C267.94,415.86 266.68,425.30 268.97,425.30C269.29,425.30 270.28,425.30 271.58,425.30C272.89,425.30 272.89,425.30 274.19,425.30C275.50,425.30 275.50,425.30 276.81,425.30C278.11,425.30 278.11,425.30 279.42,425.30C280.72,425.30 280.72,425.30 282.03,425.30C283.33,425.30 283.33,425.30 284.64,425.30C285.94,425.30 285.94,425.30 287.25,425.30C288.55,425.30 288.55,425.30 289.86,425.30C291.17,425.30 291.17,425.30 292.47,425.30C293.78,425.30 293.78,425.30 295.08,425.30C296.39,425.30 296.45,425.30 297.69,425.11C299.06,424.91 299.00,424.50 300.30,423.88C301.61,423.25 301.54,422.85 302.91,422.62C304.15,422.40 304.22,422.40 305.52,422.40C306.83,422.40 306.83,422.40 308.14,422.40C309.44,422.40 309.44,422.40 310.75,422.40C312.05,422.40 312.05,422.40 313.36,422.40C314.66,422.40 314.66,422.40 315.97,422.40C317.27,422.40 317.27,422.40 318.58,422.40C319.88,422.40 321.07,422.40 321.19,422.40C323.68,422.40 322.27,396.38 323.80,370.38C324.88,352.04 324.43,333.73 326.41,333.73C327.04,333.73 327.33,339.50 329.02,345.01C329.94,348.01 329.79,349.93 331.63,350.74C332.40,351.08 332.96,351.08 334.24,351.08C335.57,351.08 336.53,351.08 336.86,350.34C339.14,345.24 338.31,341.02 339.47,331.65C340.92,319.82 340.38,319.74 342.08,307.96C342.99,301.59 342.70,301.32 344.69,295.34C345.31,293.46 346.31,292.24 347.30,292.24C348.92,292.24 348.38,295.41 349.91,298.34C350.99,300.41 350.84,302.14 352.52,302.24C353.45,302.30 353.83,302.27 355.13,302.30C356.44,302.33 357.31,302.30 357.74,302.36C359.92,302.67 359.77,308.72 360.35,315.27C362.38,337.88 361.62,337.98 362.96,360.67C364.24,382.24 363.75,382.29 365.57,403.81C366.36,413.11 366.03,413.45 368.19,422.31C368.64,424.18 369.24,424.48 370.80,425.26C371.85,425.79 372.10,425.79 373.41,425.79C374.71,425.79 375.29,425.79 376.02,425.25C377.91,423.83 378.48,422.26 378.63,418.79C381.09,360.56 379.29,360.29 381.24,301.85C381.90,282.10 381.54,262.40 383.85,262.40C384.15,262.40 385.27,264.58 386.46,266.88C387.88,269.62 387.64,269.75 389.07,272.48C390.25,274.73 390.13,274.87 391.68,276.85C392.74,278.21 393.82,279.16 394.29,279.16C396.43,279.16 396.36,271.50 396.90,263.68C398.97,234.09 397.04,233.37 399.51,204.35C399.65,202.79 400.74,203.29 402.13,202.52C403.35,201.85 404.03,202.52 404.74,201.47C406.64,198.65 406.06,197.95 407.35,194.42C408.67,190.77 409.59,187.11 409.96,187.11C412.21,187.11 411.53,211.01 412.57,234.93C414.14,271.20 413.54,307.49 415.18,307.49C416.16,307.49 416.81,285.88 417.79,264.25C419.42,228.06 419.64,191.84 420.40,191.84C422.25,191.84 421.05,279.40 423.01,366.92C423.67,396.13 423.12,425.30 425.62,425.30C425.73,425.30 426.93,425.30 428.23,425.30C429.54,425.30 429.54,425.30 430.85,425.30C432.15,425.30 432.15,425.30 433.46,425.30C434.76,425.30 434.76,425.30 436.07,425.30C437.37,425.30 437.37,425.30 438.68,425.30C439.98,425.30 439.98,425.30 441.29,425.30C442.59,425.30 442.59,425.30 443.90,425.30C445.20,425.30 445.25,425.30 446.51,425.30C447.86,425.30 447.97,425.05 449.12,424.31C450.58,423.36 450.23,421.94 451.73,421.92C452.84,421.91 453.04,421.91 454.34,421.91C455.65,421.91 455.65,421.91 456.95,421.92C458.26,421.93 458.26,421.94 459.56,421.95C460.87,421.96 460.87,421.96 462.17,421.97C463.48,421.98 463.48,421.98 464.79,421.99C466.09,422.00 467.34,422.00 467.40,422.00C469.95,422.00 467.86,365.87 470.01,309.85C470.47,297.85 470.86,285.97 472.62,285.97C473.48,285.97 473.37,291.93 475.23,297.41C475.98,299.61 476.16,301.24 477.84,301.34C478.77,301.40 479.15,301.36 480.45,301.40C481.76,301.44 482.98,301.40 483.06,301.50C485.59,304.35 484.05,340.05 485.67,378.57C486.66,401.95 485.81,425.30 488.28,425.30C488.42,425.30 489.59,425.30 490.89,425.30C492.20,425.30 492.20,425.30 493.50,425.30C494.81,425.30 494.81,425.30 496.12,425.30C497.42,425.30 497.42,425.30 498.73,425.30C500.03,425.30 500.03,425.30 501.34,425.30C502.64,425.30 502.64,425.30 503.95,425.30C505.25,425.30 505.25,425.30 506.56,425.30C507.86,425.30 507.86,425.30 509.17,425.30C510.48,425.30 510.48,425.30 511.78,425.30C513.09,425.30 513.09,425.30 514.39,425.30C515.70,425.30 515.70,425.30 517.00,425.30C518.31,425.30 518.31,425.30 519.61,425.30C520.92,425.30 520.92,425.30 522.22,425.30C523.53,425.30 523.53,425.30 524.84,425.30C526.14,425.30 526.14,425.30 527.45,425.30C528.75,425.30 528.75,425.30 530.06,425.30C531.36,425.30 531.36,425.30 532.67,425.30C533.97,425.30 533.97,425.30 535.28,425.30C536.58,425.30 536.58,425.30 537.89,425.30C539.19,425.30 539.19,425.30 540.50,425.30C541.81,425.30 541.81,425.30 543.11,425.30C544.42,425.30 544.42,425.30 545.72,425.30C547.03,425.30 547.03,425.30 548.33,425.30C549.64,425.30 549.64,425.30 550.94,425.30C552.25,425.30 552.25,425.30 553.55,425.30C554.86,425.30 554.86,425.30 556.16,425.30C557.47,425.30 557.47,425.30 558.78,425.30C560.08,425.30 560.08,425.30 561.39,425.30C562.69,425.30 562.69,425.30 564.00,425.30C565.30,425.30 565.30,425.30 566.61,425.30C567.91,425.30 567.91,425.30 569.22,425.30C570.52,425.30 570.52,425.30 571.83,425.30C573.14,425.30 573.14,425.30 574.44,425.30C575.75,425.30 575.75,425.30 577.05,425.30C578.36,425.30 578.36,425.30 579.66,425.30C580.97,425.30 580.97,425.30 582.27,425.30C583.58,425.30 583.58,425.30 584.88,425.30C586.19,425.30 586.19,425.30 587.50,425.30C588.80,425.30 588.80,425.30 590.11,425.30C591.41,425.30 591.41,425.30 592.72,425.30C594.02,425.30 594.02,425.30 595.33,425.30C596.63,425.30 596.63,425.30 597.94,425.30C599.24,425.30 599.24,425.30 600.55,425.30C601.85,425.30 601.85,425.30 603.16,425.30C604.47,425.30 604.47,425.30 605.77,425.30C607.08,425.30 607.08,425.30 608.38,425.30C609.69,425.30 609.69,425.30 610.99,425.30C612.30,425.30 612.30,425.30 613.60,425.30C614.91,425.30 614.91,425.30 616.21,425.30C617.52,425.30 617.52,425.30 618.83,425.30C620.13,425.30 620.13,425.30 621.44,425.30C622.74,425.30 622.74,425.30 624.05,425.30C625.35,425.30 625.35,425.30 626.66,425.30C627.96,425.30 627.96,425.30 629.27,425.30C630.57,425.30 630.57,425.30 631.88,425.30C633.18,425.30 633.18,425.30 634.49,425.30C635.80,425.30 635.80,425.30 637.10,425.30C638.41,425.30 638.41,425.30 639.71,425.30C641.02,425.30 641.02,425.30 642.32,425.30C643.63,425.30 643.63,425.30 644.93,425.30C646.24,425.30 646.24,425.30 647.54,425.30C648.85,425.30 648.85,425.30 650.15,425.30C651.46,425.30 651.46,425.30 652.77,425.30C654.07,425.30 654.07,425.30 655.38,425.30C656.68,425.30 656.68,425.30 657.99,425.30C659.29,425.30 659.29,425.30 660.60,425.30C661.90,425.30 661.90,425.30 663.21,425.30C664.51,425.30 664.51,425.30 665.82,425.30C667.13,425.30 667.13,425.30 668.43,425.30C669.74,425.30 669.74,425.30 671.04,425.30C672.35,425.30 672.35,425.30 673.65,425.30C674.96,425.30 674.96,425.30 676.26,425.30C677.57,425.30 677.57,425.30 678.87,425.30C680.18,425.30 680.18,425.30 681.49,425.30C682.79,425.30 682.79,425.30 684.10,425.30C685.40,425.30 685.40,425.30 686.71,425.30C688.01,425.30 688.01,425.30 689.32,425.30C690.62,425.30 690.62,425.30 691.93,425.30C693.23,425.30 693.23,425.30 694.54,425.30C695.84,425.30 695.84,425.30 697.15,425.30C698.46,425.30 698.46,425.30 699.76,425.30C701.07,425.30 701.07,425.30 702.37,425.30C703.68,425.30 703.68,425.30 704.98,425.30C706.29,425.30 706.29,425.30 707.59,425.30C708.90,425.30 708.90,425.30 710.20,425.30C711.51,425.30 711.51,425.30 712.82,425.30C714.12,425.30 714.12,425.30 715.43,425.30C716.73,425.30 716.73,425.30 718.04,425.30C719.34,425.30 719.34,425.30 720.65,425.30C721.95,425.30 721.95,425.30 723.26,425.30C724.56,425.30 724.56,425.30 725.87,425.30C727.17,425.30 727.17,425.30 728.48,425.30C729.79,425.30 729.79,425.30 731.09,425.30C732.40,425.30 732.40,425.30 733.70,425.30C735.01,425.30 735.01,425.30 736.31,425.30C737.62,425.30 737.62,425.30 738.92,425.30C740.23,425.30 740.23,425.30 741.53,425.30C742.84,425.30 742.84,425.30 744.14,425.30C745.45,425.30 745.45,425.30 746.76,425.30C748.06,425.30 748.06,425.30 749.37,425.30C750.67,425.30 750.67,425.30 751.98,425.30C753.28,425.30 753.28,425.30 754.59,425.30C755.89,425.30 755.89,425.30 757.20,425.30C758.50,425.30 758.50,425.30 759.81,425.30C761.12,425.30 761.12,425.30 762.42,425.30C763.73,425.30 763.73,425.30 765.03,425.30C766.34,425.30 766.34,425.30 767.64,425.30C768.95,425.30 768.95,425.30 770.25,425.30C771.56,425.30 771.56,425.30 772.86,425.30C774.17,425.30 774.17,425.30 775.47,425.30C776.78,425.30 776.78,425.30 778.09,425.30C779.39,425.30 779.39,425.30 780.70,425.30C782.00,425.30 782.00,425.30 783.31,425.30C784.61,425.30 784.61,425.30 785.92,425.30C787.22,425.30 787.22,425.30 788.53,425.30C789.83,425.30 789.83,425.30 791.14,425.30C792.45,425.30 792.45,425.30 793.75,425.30C795.06,425.30 795.06,425.30 796.36,425.30C797.67,425.30 797.67,425.30 798.97,425.30C800.28,425.30 800.28,425.30 801.58,425.30C802.89,425.30 802.89,425.30 804.19,425.30C805.50,425.30 805.50,425.30 806.81,425.30C808.11,425.30 808.11,425.30 809.42,425.30C810.72,425.30 810.72,425.30 812.03,425.30C813.33,425.30 813.33,425.30 814.64,425.30C815.94,425.30 815.94,425.30 817.25,425.30C818.55,425.30 818.55,425.30 819.86,425.30C821.16,425.30 821.16,425.30 822.47,425.30C823.78,425.30 823.78,425.30 825.08,425.30C826.39,425.30 826.39,425.30 827.69,425.30C829.00,425.30 829.00,425.30 830.30,425.30C831.61,425.30 831.61,425.30 832.91,425.30C834.22,425.30 834.22,425.30 835.52,425.30C836.83,425.30 836.83,425.30 838.13,425.30C839.44,425.30 839.44,425.30 840.75,425.30C842.05,425.30 842.05,425.30 843.36,425.30C844.66,425.30 844.66,425.30 845.97,425.30C847.27,425.30 847.27,425.30 848.58,425.30C849.88,425.30 849.88,425.30 851.19,425.30C852.49,425.30 852.49,425.30 853.80,425.30C855.11,425.30 855.11,425.30 856.41,425.30C857.72,425.30 857.72,425.30 859.02,425.30C860.33,425.30 860.33,425.30 861.63,425.30C862.94,425.30 862.94,425.30 864.24,425.30C865.55,425.30 865.55,425.30 866.85,425.30C868.16,425.30 868.16,425.30 869.46,425.30C870.77,425.30 870.77,425.30 872.08,425.30C873.38,425.30 873.38,425.30 874.69,425.30C875.99,425.30 875.99,425.30 877.30,425.30C878.60,425.30 879.83,425.30 879.91,425.30C882.44,425.30 881.48,385.52 882.52,345.72C884.09,285.98 882.63,285.64 885.13,226.23C885.24,223.63 886.00,221.71 887.74,221.71C888.61,221.71 889.05,221.72 890.35,221.75C891.66,221.78 891.68,221.75 892.96,221.83C894.29,221.91 894.54,221.83 895.57,222.57C897.15,223.71 896.81,224.25 898.18,225.81C899.42,227.21 899.27,227.86 900.80,228.50C901.88,228.95 902.09,228.80 903.41,228.95C904.70,229.10 904.72,228.98 906.02,229.12C907.33,229.25 908.13,229.12 908.63,229.50C910.75,231.15 911.06,234.88 911.24,240.54C913.68,320.01 911.60,320.21 913.85,399.77C914.21,412.59 914.09,425.30 916.46,425.30C916.70,425.30 917.77,425.30 919.07,425.30C920.38,425.30 920.38,425.30 921.68,425.30C922.99,425.30 922.99,425.30 924.29,425.30C925.60,425.30 925.60,425.30 926.90,425.30C928.21,425.30 928.21,425.30 929.51,425.30C930.82,425.30 931.99,425.30 932.12,425.30C934.60,425.30 934.05,401.16 934.74,376.98C936.66,308.96 934.95,308.81 937.35,240.88C937.57,234.67 937.80,228.70 939.96,228.70C940.41,228.70 941.26,228.70 942.57,228.70C943.87,228.70 944.94,228.70 945.18,228.70C947.55,228.70 947.41,241.57 947.79,254.54C950.02,330.11 948.09,330.24 950.40,405.78C950.70,415.62 950.71,425.30 953.01,425.30C953.32,425.30 954.32,425.30 955.62,425.30C956.93,425.30 956.93,425.30 958.23,425.30C959.54,425.30 959.54,425.30 960.84,425.30C962.15,425.30 963.45,425.30 963.45,425.30L962.90,425.30L227.20,425.30Z" fill="#b8b5ca"/>
<line x1="404.6" x2="404.6" y1="204" y2="425.3" stroke="#c9c7da" stroke-width="0.6" stroke-dasharray="2.6,2"/>
<path d="M224.8,428.6V425.6H965.8V428.6" fill="none" stroke="#6e7079" stroke-width="0.8"/>
<text x="227.20" y="436.6" text-anchor="middle" class="ax">11:40</text>
<line x1="256.13" x2="256.13" y1="425.6" y2="428.6" stroke="#6e7079" stroke-width="0.8"/>
<text x="258.53" y="436.6" text-anchor="middle" class="ax">12:40</text>
<line x1="287.46" x2="287.46" y1="425.6" y2="428.6" stroke="#6e7079" stroke-width="0.8"/>
<text x="289.86" y="436.6" text-anchor="middle" class="ax">13:40</text>
<line x1="318.79" x2="318.79" y1="425.6" y2="428.6" stroke="#6e7079" stroke-width="0.8"/>
<text x="321.19" y="436.6" text-anchor="middle" class="ax">14:40</text>
<line x1="350.12" x2="350.12" y1="425.6" y2="428.6" stroke="#6e7079" stroke-width="0.8"/>
<text x="352.52" y="436.6" text-anchor="middle" class="ax">15:40</text>
<line x1="381.45" x2="381.45" y1="425.6" y2="428.6" stroke="#6e7079" stroke-width="0.8"/>
<text x="383.85" y="436.6" text-anchor="middle" class="ax">16:40</text>
<line x1="412.78" x2="412.78" y1="425.6" y2="428.6" stroke="#6e7079" stroke-width="0.8"/>
<text x="415.18" y="436.6" text-anchor="middle" class="ax">17:40</text>
<line x1="444.11" x2="444.11" y1="425.6" y2="428.6" stroke="#6e7079" stroke-width="0.8"/>
<text x="446.51" y="436.6" text-anchor="middle" class="ax">18:40</text>
<line x1="475.44" x2="475.44" y1="425.6" y2="428.6" stroke="#6e7079" stroke-width="0.8"/>
<text x="477.84" y="436.6" text-anchor="middle" class="ax">19:40</text>
<line x1="506.77" x2="506.77" y1="425.6" y2="428.6" stroke="#6e7079" stroke-width="0.8"/>
<text x="509.17" y="436.6" text-anchor="middle" class="ax">20:40</text>
<line x1="538.10" x2="538.10" y1="425.6" y2="428.6" stroke="#6e7079" stroke-width="0.8"/>
<text x="540.50" y="436.6" text-anchor="middle" class="ax">21:40</text>
<line x1="569.43" x2="569.43" y1="425.6" y2="428.6" stroke="#6e7079" stroke-width="0.8"/>
<text x="571.83" y="436.6" text-anchor="middle" class="ax">22:40</text>
<line x1="600.76" x2="600.76" y1="425.6" y2="428.6" stroke="#6e7079" stroke-width="0.8"/>
<text x="603.16" y="436.6" text-anchor="middle" class="ax">23:40</text>
<line x1="632.09" x2="632.09" y1="425.6" y2="428.6" stroke="#6e7079" stroke-width="0.8"/>
<text x="634.49" y="436.6" text-anchor="middle" class="ax">00:40</text>
<line x1="663.42" x2="663.42" y1="425.6" y2="428.6" stroke="#6e7079" stroke-width="0.8"/>
<text x="665.82" y="436.6" text-anchor="middle" class="ax">01:40</text>
<line x1="694.75" x2="694.75" y1="425.6" y2="428.6" stroke="#6e7079" stroke-width="0.8"/>
<text x="697.15" y="436.6" text-anchor="middle" class="ax">02:40</text>
<line x1="726.08" x2="726.08" y1="425.6" y2="428.6" stroke="#6e7079" stroke-width="0.8"/>
<text x="728.48" y="436.6" text-anchor="middle" class="ax">03:40</text>
<line x1="757.41" x2="757.41" y1="425.6" y2="428.6" stroke="#6e7079" stroke-width="0.8"/>
<text x="759.81" y="436.6" text-anchor="middle" class="ax">04:40</text>
<line x1="788.74" x2="788.74" y1="425.6" y2="428.6" stroke="#6e7079" stroke-width="0.8"/>
<text x="791.14" y="436.6" text-anchor="middle" class="ax">05:40</text>
<line x1="820.07" x2="820.07" y1="425.6" y2="428.6" stroke="#6e7079" stroke-width="0.8"/>
<text x="822.47" y="436.6" text-anchor="middle" class="ax">06:40</text>
<line x1="851.40" x2="851.40" y1="425.6" y2="428.6" stroke="#6e7079" stroke-width="0.8"/>
<text x="853.80" y="436.6" text-anchor="middle" class="ax">07:40</text>
<line x1="882.73" x2="882.73" y1="425.6" y2="428.6" stroke="#6e7079" stroke-width="0.8"/>
<text x="885.13" y="436.6" text-anchor="middle" class="ax">08:40</text>
<line x1="914.06" x2="914.06" y1="425.6" y2="428.6" stroke="#6e7079" stroke-width="0.8"/>
<text x="916.46" y="436.6" text-anchor="middle" class="ax">09:40</text>
<line x1="945.39" x2="945.39" y1="425.6" y2="428.6" stroke="#6e7079" stroke-width="0.8"/>
<text x="947.79" y="436.6" text-anchor="middle" class="ax">10:40</text>
<path d="M227.20,425.30C227.20,425.30 228.51,425.30 229.81,425.30C231.12,425.30 231.12,425.30 232.42,425.30C233.73,425.30 233.73,425.30 235.03,425.30C236.34,425.30 236.34,425.30 237.64,425.30C238.95,425.30 238.95,425.30 240.25,425.30C241.56,425.30 241.56,425.30 242.86,425.30C244.17,425.30 244.17,425.30 245.48,425.30C246.78,425.30 246.78,425.30 248.09,425.30C249.39,425.30 249.39,425.30 250.70,425.30C252.00,425.30 252.78,425.30 253.31,425.30C255.40,425.30 255.14,420.36 255.92,415.23C257.75,403.26 256.17,391.09 258.53,391.09C258.78,391.09 259.84,391.09 261.14,391.09C262.45,391.09 263.33,391.09 263.75,391.09C265.94,391.09 265.34,397.69 266.36,404.38C267.95,414.80 266.65,425.30 268.97,425.30C269.26,425.30 270.28,425.30 271.58,425.30C272.89,425.30 272.89,425.30 274.19,425.30C275.50,425.30 275.50,425.30 276.81,425.30C278.11,425.30 278.11,425.30 279.42,425.30C280.72,425.30 280.72,425.30 282.03,425.30C283.33,425.30 283.33,425.30 284.64,425.30C285.94,425.30 285.94,425.30 287.25,425.30C288.55,425.30 288.55,425.30 289.86,425.30C291.17,425.30 291.17,425.30 292.47,425.30C293.78,425.30 293.79,425.30 295.08,425.30C296.40,425.30 296.66,425.30 297.69,424.84C299.27,424.14 299.01,423.32 300.30,421.77C301.63,420.18 301.34,419.67 302.91,418.56C303.95,417.83 304.20,417.96 305.52,417.83C306.81,417.71 306.83,417.76 308.14,417.71C309.44,417.65 309.44,417.67 310.75,417.62C312.05,417.57 312.05,417.56 313.36,417.51C314.66,417.47 314.66,417.48 315.97,417.43C317.27,417.39 317.28,417.42 318.58,417.34C319.89,417.26 321.08,417.34 321.19,417.11C323.69,411.73 322.10,386.24 323.80,355.41C324.71,338.84 324.57,322.32 326.41,322.32C327.18,322.32 327.34,329.21 329.02,335.89C329.95,339.58 329.69,343.07 331.63,343.07C332.30,343.07 332.94,343.07 334.24,343.07C335.55,343.07 336.56,343.07 336.86,343.07C339.17,343.07 338.26,333.09 339.47,323.08C340.87,311.49 340.46,311.44 342.08,299.88C343.07,292.74 342.89,292.63 344.69,285.68C345.50,282.52 345.98,279.65 347.30,279.65C348.59,279.65 348.46,282.67 349.91,285.54C351.07,287.85 350.86,288.14 352.52,290.02C353.48,291.11 353.74,291.15 355.13,291.48C356.35,291.77 357.43,291.48 357.74,291.77C360.04,293.90 359.65,301.36 360.35,311.05C362.26,337.36 361.51,337.42 362.96,363.78C364.12,384.62 363.71,384.67 365.57,405.44C366.32,413.77 366.06,414.11 368.19,421.98C368.67,423.77 369.26,423.98 370.80,424.75C371.87,425.29 372.10,425.29 373.41,425.29C374.71,425.29 375.35,425.29 376.02,424.75C377.96,423.17 378.51,421.28 378.63,417.39C381.12,338.19 378.88,337.88 381.24,258.56C381.50,249.94 382.06,241.50 383.85,241.50C384.67,241.50 385.07,245.23 386.46,248.91C387.68,252.13 387.63,252.16 389.07,255.29C390.24,257.83 390.16,257.91 391.68,260.23C392.77,261.89 393.99,263.26 394.29,263.26C396.60,263.26 395.92,248.10 396.90,232.90C398.53,207.85 397.07,207.28 399.51,182.76C399.68,181.07 400.70,181.43 402.13,180.48C403.31,179.69 404.07,180.44 404.74,179.27C406.69,175.81 406.08,175.25 407.35,171.21C408.69,166.91 409.60,162.58 409.96,162.58C412.21,162.58 411.48,190.80 412.57,219.03C414.09,258.18 413.49,297.35 415.18,297.35C416.10,297.35 416.93,276.06 417.79,254.73C419.54,211.46 419.57,168.16 420.40,168.16C422.18,168.16 421.12,261.19 423.01,354.19C423.73,389.76 423.10,425.30 425.62,425.30C425.72,425.30 426.93,425.30 428.23,425.30C429.54,425.30 429.54,425.30 430.85,425.30C432.15,425.30 432.15,425.30 433.46,425.30C434.76,425.30 434.76,425.30 436.07,425.30C437.37,425.30 437.37,425.30 438.68,425.30C439.98,425.30 439.98,425.30 441.29,425.30C442.59,425.30 442.59,425.30 443.90,425.30C445.20,425.30 445.40,425.30 446.51,425.30C448.01,425.30 448.08,424.33 449.12,422.94C450.69,420.85 449.98,418.34 451.73,418.34C452.59,418.34 453.04,418.34 454.34,418.34C455.65,418.35 455.65,418.39 456.95,418.44C458.26,418.50 458.26,418.50 459.56,418.55C460.87,418.61 460.87,418.60 462.17,418.65C463.48,418.71 463.48,418.72 464.79,418.77C466.09,418.81 467.34,418.83 467.40,418.83C469.95,418.83 467.80,357.73 470.01,296.75C470.41,285.49 471.03,274.34 472.62,274.34C473.64,274.34 473.31,281.70 475.23,288.61C475.92,291.11 476.10,293.05 477.84,293.17C478.71,293.22 479.15,293.18 480.45,293.22C481.76,293.26 482.99,293.22 483.06,293.32C485.60,296.68 483.89,338.37 485.67,383.37C486.50,404.36 485.83,425.30 488.28,425.30C488.44,425.30 489.59,425.30 490.89,425.30C492.20,425.30 492.20,425.30 493.50,425.30C494.81,425.30 494.81,425.30 496.12,425.30C497.42,425.30 497.42,425.30 498.73,425.30C500.03,425.30 500.03,425.30 501.34,425.30C502.64,425.30 502.64,425.30 503.95,425.30C505.25,425.30 505.25,425.30 506.56,425.30C507.86,425.30 507.86,425.30 509.17,425.30C510.48,425.30 510.48,425.30 511.78,425.30C513.09,425.30 513.09,425.30 514.39,425.30C515.70,425.30 515.70,425.30 517.00,425.30C518.31,425.30 518.31,425.30 519.61,425.30C520.92,425.30 520.92,425.30 522.22,425.30C523.53,425.30 523.53,425.30 524.84,425.30C526.14,425.30 526.14,425.30 527.45,425.30C528.75,425.30 528.75,425.30 530.06,425.30C531.36,425.30 531.36,425.30 532.67,425.30C533.97,425.30 533.97,425.30 535.28,425.30C536.58,425.30 536.58,425.30 537.89,425.30C539.19,425.30 539.19,425.30 540.50,425.30C541.81,425.30 541.81,425.30 543.11,425.30C544.42,425.30 544.42,425.30 545.72,425.30C547.03,425.30 547.03,425.30 548.33,425.30C549.64,425.30 549.64,425.30 550.94,425.30C552.25,425.30 552.25,425.30 553.55,425.30C554.86,425.30 554.86,425.30 556.16,425.30C557.47,425.30 557.47,425.30 558.78,425.30C560.08,425.30 560.08,425.30 561.39,425.30C562.69,425.30 562.69,425.30 564.00,425.30C565.30,425.30 565.30,425.30 566.61,425.30C567.91,425.30 567.91,425.30 569.22,425.30C570.52,425.30 570.52,425.30 571.83,425.30C573.14,425.30 573.14,425.30 574.44,425.30C575.75,425.30 575.75,425.30 577.05,425.30C578.36,425.30 578.36,425.30 579.66,425.30C580.97,425.30 580.97,425.30 582.27,425.30C583.58,425.30 583.58,425.30 584.88,425.30C586.19,425.30 586.19,425.30 587.50,425.30C588.80,425.30 588.80,425.30 590.11,425.30C591.41,425.30 591.41,425.30 592.72,425.30C594.02,425.30 594.02,425.30 595.33,425.30C596.63,425.30 596.63,425.30 597.94,425.30C599.24,425.30 599.24,425.30 600.55,425.30C601.85,425.30 601.85,425.30 603.16,425.30C604.47,425.30 604.47,425.30 605.77,425.30C607.08,425.30 607.08,425.30 608.38,425.30C609.69,425.30 609.69,425.30 610.99,425.30C612.30,425.30 612.30,425.30 613.60,425.30C614.91,425.30 614.91,425.30 616.21,425.30C617.52,425.30 617.52,425.30 618.83,425.30C620.13,425.30 620.13,425.30 621.44,425.30C622.74,425.30 622.74,425.30 624.05,425.30C625.35,425.30 625.35,425.30 626.66,425.30C627.96,425.30 627.96,425.30 629.27,425.30C630.57,425.30 630.57,425.30 631.88,425.30C633.18,425.30 633.18,425.30 634.49,425.30C635.80,425.30 635.80,425.30 637.10,425.30C638.41,425.30 638.41,425.30 639.71,425.30C641.02,425.30 641.02,425.30 642.32,425.30C643.63,425.30 643.63,425.30 644.93,425.30C646.24,425.30 646.24,425.30 647.54,425.30C648.85,425.30 648.85,425.30 650.15,425.30C651.46,425.30 651.46,425.30 652.77,425.30C654.07,425.30 654.07,425.30 655.38,425.30C656.68,425.30 656.68,425.30 657.99,425.30C659.29,425.30 659.29,425.30 660.60,425.30C661.90,425.30 661.90,425.30 663.21,425.30C664.51,425.30 664.51,425.30 665.82,425.30C667.13,425.30 667.13,425.30 668.43,425.30C669.74,425.30 669.74,425.30 671.04,425.30C672.35,425.30 672.35,425.30 673.65,425.30C674.96,425.30 674.96,425.30 676.26,425.30C677.57,425.30 677.57,425.30 678.87,425.30C680.18,425.30 680.18,425.30 681.49,425.30C682.79,425.30 682.79,425.30 684.10,425.30C685.40,425.30 685.40,425.30 686.71,425.30C688.01,425.30 688.01,425.30 689.32,425.30C690.62,425.30 690.62,425.30 691.93,425.30C693.23,425.30 693.23,425.30 694.54,425.30C695.84,425.30 695.84,425.30 697.15,425.30C698.46,425.30 698.46,425.30 699.76,425.30C701.07,425.30 701.07,425.30 702.37,425.30C703.68,425.30 703.68,425.30 704.98,425.30C706.29,425.30 706.29,425.30 707.59,425.30C708.90,425.30 708.90,425.30 710.20,425.30C711.51,425.30 711.51,425.30 712.82,425.30C714.12,425.30 714.12,425.30 715.43,425.30C716.73,425.30 716.73,425.30 718.04,425.30C719.34,425.30 719.34,425.30 720.65,425.30C721.95,425.30 721.95,425.30 723.26,425.30C724.56,425.30 724.56,425.30 725.87,425.30C727.17,425.30 727.17,425.30 728.48,425.30C729.79,425.30 729.79,425.30 731.09,425.30C732.40,425.30 732.40,425.30 733.70,425.30C735.01,425.30 735.01,425.30 736.31,425.30C737.62,425.30 737.62,425.30 738.92,425.30C740.23,425.30 740.23,425.30 741.53,425.30C742.84,425.30 742.84,425.30 744.14,425.30C745.45,425.30 745.45,425.30 746.76,425.30C748.06,425.30 748.06,425.30 749.37,425.30C750.67,425.30 750.67,425.30 751.98,425.30C753.28,425.30 753.28,425.30 754.59,425.30C755.89,425.30 755.89,425.30 757.20,425.30C758.50,425.30 758.50,425.30 759.81,425.30C761.12,425.30 761.12,425.30 762.42,425.30C763.73,425.30 763.73,425.30 765.03,425.30C766.34,425.30 766.34,425.30 767.64,425.30C768.95,425.30 768.95,425.30 770.25,425.30C771.56,425.30 771.56,425.30 772.86,425.30C774.17,425.30 774.17,425.30 775.47,425.30C776.78,425.30 776.78,425.30 778.09,425.30C779.39,425.30 779.39,425.30 780.70,425.30C782.00,425.30 782.00,425.30 783.31,425.30C784.61,425.30 784.61,425.30 785.92,425.30C787.22,425.30 787.22,425.30 788.53,425.30C789.83,425.30 789.83,425.30 791.14,425.30C792.45,425.30 792.45,425.30 793.75,425.30C795.06,425.30 795.06,425.30 796.36,425.30C797.67,425.30 797.67,425.30 798.97,425.30C800.28,425.30 800.28,425.30 801.58,425.30C802.89,425.30 802.89,425.30 804.19,425.30C805.50,425.30 805.50,425.30 806.81,425.30C808.11,425.30 808.11,425.30 809.42,425.30C810.72,425.30 810.72,425.30 812.03,425.30C813.33,425.30 813.33,425.30 814.64,425.30C815.94,425.30 815.94,425.30 817.25,425.30C818.55,425.30 818.55,425.30 819.86,425.30C821.16,425.30 821.16,425.30 822.47,425.30C823.78,425.30 823.78,425.30 825.08,425.30C826.39,425.30 826.39,425.30 827.69,425.30C829.00,425.30 829.00,425.30 830.30,425.30C831.61,425.30 831.61,425.30 832.91,425.30C834.22,425.30 834.22,425.30 835.52,425.30C836.83,425.30 836.83,425.30 838.13,425.30C839.44,425.30 839.44,425.30 840.75,425.30C842.05,425.30 842.05,425.30 843.36,425.30C844.66,425.30 844.66,425.30 845.97,425.30C847.27,425.30 847.27,425.30 848.58,425.30C849.88,425.30 849.88,425.30 851.19,425.30C852.49,425.30 852.49,425.30 853.80,425.30C855.11,425.30 855.11,425.30 856.41,425.30C857.72,425.30 857.72,425.30 859.02,425.30C860.33,425.30 860.33,425.30 861.63,425.30C862.94,425.30 862.94,425.30 864.24,425.30C865.55,425.30 865.55,425.30 866.85,425.30C868.16,425.30 868.16,425.30 869.46,425.30C870.77,425.30 870.77,425.30 872.08,425.30C873.38,425.30 873.38,425.30 874.69,425.30C875.99,425.30 875.99,425.30 877.30,425.30C878.60,425.30 879.86,425.30 879.91,425.30C882.47,425.30 880.90,357.15 882.52,289.01C883.51,247.52 882.60,224.67 885.13,206.04C885.21,205.44 886.42,205.44 887.74,205.44C889.03,205.44 889.05,205.44 890.35,205.44C891.66,205.44 891.78,205.44 892.96,205.44C894.39,205.44 894.67,205.99 895.57,207.23C897.28,209.59 896.41,210.44 898.18,212.64C899.02,213.67 899.44,213.64 900.80,213.70C902.05,213.75 902.10,213.73 903.41,213.75C904.71,213.77 904.71,213.75 906.02,213.77C907.32,213.80 907.96,213.77 908.63,213.85C910.57,214.08 911.13,217.16 911.24,220.92C913.74,309.14 911.59,309.42 913.85,397.80C914.20,411.60 914.07,425.30 916.46,425.30C916.69,425.30 917.77,425.30 919.07,425.30C920.38,425.30 920.38,425.30 921.68,425.30C922.99,425.30 922.99,425.30 924.29,425.30C925.60,425.30 925.60,425.30 926.90,425.30C928.21,425.30 928.21,425.30 929.51,425.30C930.82,425.30 932.02,425.30 932.12,425.29C934.63,425.11 933.91,392.90 934.74,360.49C936.52,290.13 934.85,289.85 937.35,219.75C937.46,216.61 938.11,214.02 939.96,214.02C940.72,214.02 941.26,214.02 942.57,214.02C943.87,214.02 944.86,214.02 945.18,214.02C947.47,214.02 947.54,223.08 947.79,232.31C950.15,318.45 948.07,318.61 950.40,404.76C950.68,415.10 950.69,425.30 953.01,425.30C953.30,425.30 954.32,425.30 955.62,425.30C956.93,425.30 956.93,425.30 958.23,425.30C959.54,425.30 959.54,425.30 960.84,425.30C962.15,425.30 963.45,425.30 963.45,425.30" fill="none" stroke="#90ed7d" stroke-width="1.45" stroke-linejoin="round"/>
<path d="M227.20,425.30C227.20,425.30 228.51,425.30 229.81,425.30C231.12,425.30 231.12,425.30 232.42,425.30C233.73,425.30 233.73,425.30 235.03,425.30C236.34,425.30 236.34,425.30 237.64,425.30C238.95,425.30 238.95,425.30 240.25,425.30C241.56,425.30 241.56,425.30 242.86,425.30C244.17,425.30 244.17,425.30 245.48,425.30C246.78,425.30 246.78,425.30 248.09,425.30C249.39,425.30 249.39,425.30 250.70,425.30C252.00,425.30 252.78,425.30 253.31,425.30C255.39,425.30 255.14,420.41 255.92,415.32C257.75,403.46 256.17,391.40 258.53,391.40C258.79,391.40 259.84,391.40 261.14,391.40C262.45,391.40 263.33,391.40 263.75,391.40C265.94,391.40 265.34,397.94 266.36,404.57C267.95,414.89 266.65,425.30 268.97,425.30C269.26,425.30 270.28,425.30 271.58,425.30C272.89,425.30 272.89,425.30 274.19,425.30C275.50,425.30 275.50,425.30 276.81,425.30C278.11,425.30 278.11,425.30 279.42,425.30C280.72,425.30 280.72,425.30 282.03,425.30C283.33,425.30 283.33,425.30 284.64,425.30C285.94,425.30 285.94,425.30 287.25,425.30C288.55,425.30 288.55,425.30 289.86,425.30C291.17,425.30 291.17,425.30 292.47,425.30C293.78,425.30 293.79,425.30 295.08,425.30C296.40,425.30 296.65,425.30 297.69,424.84C299.26,424.15 299.01,423.34 300.30,421.80C301.63,420.23 301.34,419.72 302.91,418.62C303.95,417.90 304.20,418.03 305.52,417.90C306.81,417.77 306.83,417.83 308.14,417.77C309.44,417.72 309.44,417.74 310.75,417.69C312.05,417.64 312.05,417.63 313.36,417.58C314.66,417.54 314.66,417.55 315.97,417.50C317.27,417.46 317.28,417.49 318.58,417.41C319.89,417.33 321.08,417.41 321.19,417.19C323.69,411.90 322.10,386.58 323.80,356.03C324.71,339.61 324.57,323.23 326.41,323.23C327.18,323.23 327.34,330.06 329.02,336.68C329.95,340.35 329.69,343.80 331.63,343.80C332.30,343.80 332.94,343.80 334.24,343.80C335.55,343.80 336.55,343.80 336.86,343.80C339.16,343.80 338.26,333.91 339.47,323.99C340.87,312.51 340.46,312.45 342.08,301.00C343.07,293.92 342.89,293.81 344.69,286.93C345.51,283.79 345.98,280.95 347.30,280.95C348.59,280.95 348.46,283.94 349.91,286.79C351.07,289.08 350.87,289.36 352.52,291.23C353.48,292.31 353.74,292.35 355.13,292.67C356.35,292.96 357.43,292.67 357.74,292.96C360.04,295.06 359.65,302.46 360.35,312.07C362.26,338.14 361.51,338.21 362.96,364.33C364.12,384.98 363.71,385.03 365.57,405.62C366.32,413.87 366.06,414.22 368.19,422.01C368.67,423.79 369.26,423.99 370.80,424.76C371.87,425.29 372.10,425.29 373.41,425.29C374.71,425.29 375.35,425.29 376.02,424.76C377.96,423.20 378.51,421.32 378.63,417.46C381.12,338.97 378.88,338.66 381.24,260.05C381.50,251.50 382.06,243.14 383.85,243.14C384.67,243.14 385.07,246.84 386.46,250.48C387.68,253.68 387.63,253.71 389.07,256.81C390.24,259.32 390.16,259.41 391.68,261.71C392.77,263.35 393.99,264.71 394.29,264.71C396.60,264.71 395.92,249.69 396.90,234.62C398.53,209.79 397.07,209.22 399.51,184.92C399.68,183.24 400.70,183.61 402.13,182.66C403.31,181.88 404.07,182.63 404.74,181.46C406.68,178.04 406.08,177.48 407.35,173.48C408.69,169.22 409.60,164.93 409.96,164.93C412.21,164.93 411.48,192.89 412.57,220.87C414.09,259.67 413.49,298.49 415.18,298.49C416.10,298.49 416.93,277.39 417.79,256.25C419.54,213.37 419.57,170.45 420.40,170.45C422.18,170.45 421.12,262.65 423.01,354.82C423.73,390.08 423.11,425.30 425.62,425.30C425.72,425.30 426.93,425.30 428.23,425.30C429.54,425.30 429.54,425.30 430.85,425.30C432.15,425.30 432.15,425.30 433.46,425.30C434.76,425.30 434.76,425.30 436.07,425.30C437.37,425.30 437.37,425.30 438.68,425.30C439.98,425.30 439.98,425.30 441.29,425.30C442.59,425.30 442.59,425.30 443.90,425.30C445.20,425.30 445.33,425.30 446.51,425.30C447.94,425.30 448.02,424.62 449.12,423.51C450.63,421.99 450.10,420.03 451.73,420.03C452.71,420.03 453.04,420.03 454.34,420.03C455.65,420.03 455.65,420.07 456.95,420.11C458.26,420.15 458.26,420.15 459.56,420.19C460.87,420.23 460.87,420.23 462.17,420.27C463.48,420.31 463.48,420.32 464.79,420.35C466.09,420.38 467.34,420.40 467.40,420.40C469.95,420.40 467.80,359.09 470.01,297.90C470.41,286.73 471.03,275.69 472.62,275.69C473.64,275.69 473.31,282.99 475.23,289.83C475.92,292.31 476.10,294.23 477.84,294.34C478.71,294.40 479.15,294.36 480.45,294.40C481.76,294.44 482.99,294.40 483.06,294.50C485.60,297.80 483.89,339.14 485.67,383.75C486.50,404.55 485.83,425.30 488.28,425.30C488.44,425.30 489.59,425.30 490.89,425.30C492.20,425.30 492.20,425.30 493.50,425.30C494.81,425.30 494.81,425.30 496.12,425.30C497.42,425.30 497.42,425.30 498.73,425.30C500.03,425.30 500.03,425.30 501.34,425.30C502.64,425.30 502.64,425.30 503.95,425.30C505.25,425.30 505.25,425.30 506.56,425.30C507.86,425.30 507.86,425.30 509.17,425.30C510.48,425.30 510.48,425.30 511.78,425.30C513.09,425.30 513.09,425.30 514.39,425.30C515.70,425.30 515.70,425.30 517.00,425.30C518.31,425.30 518.31,425.30 519.61,425.30C520.92,425.30 520.92,425.30 522.22,425.30C523.53,425.30 523.53,425.30 524.84,425.30C526.14,425.30 526.14,425.30 527.45,425.30C528.75,425.30 528.75,425.30 530.06,425.30C531.36,425.30 531.36,425.30 532.67,425.30C533.97,425.30 533.97,425.30 535.28,425.30C536.58,425.30 536.58,425.30 537.89,425.30C539.19,425.30 539.19,425.30 540.50,425.30C541.81,425.30 541.81,425.30 543.11,425.30C544.42,425.30 544.42,425.30 545.72,425.30C547.03,425.30 547.03,425.30 548.33,425.30C549.64,425.30 549.64,425.30 550.94,425.30C552.25,425.30 552.25,425.30 553.55,425.30C554.86,425.30 554.86,425.30 556.16,425.30C557.47,425.30 557.47,425.30 558.78,425.30C560.08,425.30 560.08,425.30 561.39,425.30C562.69,425.30 562.69,425.30 564.00,425.30C565.30,425.30 565.30,425.30 566.61,425.30C567.91,425.30 567.91,425.30 569.22,425.30C570.52,425.30 570.52,425.30 571.83,425.30C573.14,425.30 573.14,425.30 574.44,425.30C575.75,425.30 575.75,425.30 577.05,425.30C578.36,425.30 578.36,425.30 579.66,425.30C580.97,425.30 580.97,425.30 582.27,425.30C583.58,425.30 583.58,425.30 584.88,425.30C586.19,425.30 586.19,425.30 587.50,425.30C588.80,425.30 588.80,425.30 590.11,425.30C591.41,425.30 591.41,425.30 592.72,425.30C594.02,425.30 594.02,425.30 595.33,425.30C596.63,425.30 596.63,425.30 597.94,425.30C599.24,425.30 599.24,425.30 600.55,425.30C601.85,425.30 601.85,425.30 603.16,425.30C604.47,425.30 604.47,425.30 605.77,425.30C607.08,425.30 607.08,425.30 608.38,425.30C609.69,425.30 609.69,425.30 610.99,425.30C612.30,425.30 612.30,425.30 613.60,425.30C614.91,425.30 614.91,425.30 616.21,425.30C617.52,425.30 617.52,425.30 618.83,425.30C620.13,425.30 620.13,425.30 621.44,425.30C622.74,425.30 622.74,425.30 624.05,425.30C625.35,425.30 625.35,425.30 626.66,425.30C627.96,425.30 627.96,425.30 629.27,425.30C630.57,425.30 630.57,425.30 631.88,425.30C633.18,425.30 633.18,425.30 634.49,425.30C635.80,425.30 635.80,425.30 637.10,425.30C638.41,425.30 638.41,425.30 639.71,425.30C641.02,425.30 641.02,425.30 642.32,425.30C643.63,425.30 643.63,425.30 644.93,425.30C646.24,425.30 646.24,425.30 647.54,425.30C648.85,425.30 648.85,425.30 650.15,425.30C651.46,425.30 651.46,425.30 652.77,425.30C654.07,425.30 654.07,425.30 655.38,425.30C656.68,425.30 656.68,425.30 657.99,425.30C659.29,425.30 659.29,425.30 660.60,425.30C661.90,425.30 661.90,425.30 663.21,425.30C664.51,425.30 664.51,425.30 665.82,425.30C667.13,425.30 667.13,425.30 668.43,425.30C669.74,425.30 669.74,425.30 671.04,425.30C672.35,425.30 672.35,425.30 673.65,425.30C674.96,425.30 674.96,425.30 676.26,425.30C677.57,425.30 677.57,425.30 678.87,425.30C680.18,425.30 680.18,425.30 681.49,425.30C682.79,425.30 682.79,425.30 684.10,425.30C685.40,425.30 685.40,425.30 686.71,425.30C688.01,425.30 688.01,425.30 689.32,425.30C690.62,425.30 690.62,425.30 691.93,425.30C693.23,425.30 693.23,425.30 694.54,425.30C695.84,425.30 695.84,425.30 697.15,425.30C698.46,425.30 698.46,425.30 699.76,425.30C701.07,425.30 701.07,425.30 702.37,425.30C703.68,425.30 703.68,425.30 704.98,425.30C706.29,425.30 706.29,425.30 707.59,425.30C708.90,425.30 708.90,425.30 710.20,425.30C711.51,425.30 711.51,425.30 712.82,425.30C714.12,425.30 714.12,425.30 715.43,425.30C716.73,425.30 716.73,425.30 718.04,425.30C719.34,425.30 719.34,425.30 720.65,425.30C721.95,425.30 721.95,425.30 723.26,425.30C724.56,425.30 724.56,425.30 725.87,425.30C727.17,425.30 727.17,425.30 728.48,425.30C729.79,425.30 729.79,425.30 731.09,425.30C732.40,425.30 732.40,425.30 733.70,425.30C735.01,425.30 735.01,425.30 736.31,425.30C737.62,425.30 737.62,425.30 738.92,425.30C740.23,425.30 740.23,425.30 741.53,425.30C742.84,425.30 742.84,425.30 744.14,425.30C745.45,425.30 745.45,425.30 746.76,425.30C748.06,425.30 748.06,425.30 749.37,425.30C750.67,425.30 750.67,425.30 751.98,425.30C753.28,425.30 753.28,425.30 754.59,425.30C755.89,425.30 755.89,425.30 757.20,425.30C758.50,425.30 758.50,425.30 759.81,425.30C761.12,425.30 761.12,425.30 762.42,425.30C763.73,425.30 763.73,425.30 765.03,425.30C766.34,425.30 766.34,425.30 767.64,425.30C768.95,425.30 768.95,425.30 770.25,425.30C771.56,425.30 771.56,425.30 772.86,425.30C774.17,425.30 774.17,425.30 775.47,425.30C776.78,425.30 776.78,425.30 778.09,425.30C779.39,425.30 779.39,425.30 780.70,425.30C782.00,425.30 782.00,425.30 783.31,425.30C784.61,425.30 784.61,425.30 785.92,425.30C787.22,425.30 787.22,425.30 788.53,425.30C789.83,425.30 789.83,425.30 791.14,425.30C792.45,425.30 792.45,425.30 793.75,425.30C795.06,425.30 795.06,425.30 796.36,425.30C797.67,425.30 797.67,425.30 798.97,425.30C800.28,425.30 800.28,425.30 801.58,425.30C802.89,425.30 802.89,425.30 804.19,425.30C805.50,425.30 805.50,425.30 806.81,425.30C808.11,425.30 808.11,425.30 809.42,425.30C810.72,425.30 810.72,425.30 812.03,425.30C813.33,425.30 813.33,425.30 814.64,425.30C815.94,425.30 815.94,425.30 817.25,425.30C818.55,425.30 818.55,425.30 819.86,425.30C821.16,425.30 821.16,425.30 822.47,425.30C823.78,425.30 823.78,425.30 825.08,425.30C826.39,425.30 826.39,425.30 827.69,425.30C829.00,425.30 829.00,425.30 830.30,425.30C831.61,425.30 831.61,425.30 832.91,425.30C834.22,425.30 834.22,425.30 835.52,425.30C836.83,425.30 836.83,425.30 838.13,425.30C839.44,425.30 839.44,425.30 840.75,425.30C842.05,425.30 842.05,425.30 843.36,425.30C844.66,425.30 844.66,425.30 845.97,425.30C847.27,425.30 847.27,425.30 848.58,425.30C849.88,425.30 849.88,425.30 851.19,425.30C852.49,425.30 852.49,425.30 853.80,425.30C855.11,425.30 855.11,425.30 856.41,425.30C857.72,425.30 857.72,425.30 859.02,425.30C860.33,425.30 860.33,425.30 861.63,425.30C862.94,425.30 862.94,425.30 864.24,425.30C865.55,425.30 865.55,425.30 866.85,425.30C868.16,425.30 868.16,425.30 869.46,425.30C870.77,425.30 870.77,425.30 872.08,425.30C873.38,425.30 873.38,425.30 874.69,425.30C875.99,425.30 875.99,425.30 877.30,425.30C878.60,425.30 879.86,425.30 879.91,425.30C882.47,425.30 880.90,357.76 882.52,290.23C883.51,249.10 882.60,226.30 885.13,208.00C885.21,207.40 886.42,207.40 887.74,207.40C889.03,207.40 889.05,207.40 890.35,207.40C891.66,207.40 891.78,207.40 892.96,207.40C894.39,207.40 894.67,207.94 895.57,209.18C897.28,211.51 896.41,212.36 898.18,214.53C899.02,215.56 899.44,215.53 900.80,215.59C902.05,215.64 902.10,215.62 903.41,215.64C904.71,215.66 904.71,215.64 906.02,215.66C907.32,215.68 907.95,215.66 908.63,215.74C910.56,215.96 911.13,219.02 911.24,222.75C913.74,310.17 911.59,310.45 913.85,398.05C914.20,411.73 914.08,425.30 916.46,425.30C916.69,425.30 917.77,425.30 919.07,425.30C920.38,425.30 920.38,425.30 921.68,425.30C922.99,425.30 922.99,425.30 924.29,425.30C925.60,425.30 925.60,425.30 926.90,425.30C928.21,425.30 928.21,425.30 929.51,425.30C930.82,425.30 932.02,425.30 932.12,425.29C934.63,425.12 933.91,393.19 934.74,361.07C936.52,291.34 934.85,291.05 937.35,221.59C937.46,218.47 938.12,215.90 939.96,215.90C940.73,215.90 941.26,215.90 942.57,215.90C943.87,215.90 944.85,215.90 945.18,215.90C947.46,215.90 947.54,224.88 947.79,234.03C950.15,319.40 948.07,319.56 950.40,404.94C950.68,415.19 950.70,425.30 953.01,425.30C953.31,425.30 954.32,425.30 955.62,425.30C956.93,425.30 956.93,425.30 958.23,425.30C959.54,425.30 959.54,425.30 960.84,425.30C962.15,425.30 963.45,425.30 963.45,425.30" fill="none" stroke="#f7a35c" stroke-width="1.45" stroke-linejoin="round"/>
<path d="M227.20,425.30C227.20,425.30 228.51,425.30 229.81,425.30C231.12,425.30 231.12,425.30 232.42,425.30C233.73,425.30 233.73,425.30 235.03,425.30C236.34,425.30 236.34,425.30 237.64,425.30C238.95,425.30 238.95,425.30 240.25,425.30C241.56,425.30 241.56,425.30 242.86,425.30C244.17,425.30 244.17,425.30 245.48,425.30C246.78,425.30 246.78,425.30 248.09,425.30C249.39,425.30 249.39,425.30 250.70,425.30C252.00,425.30 252.64,425.30 253.31,425.30C255.25,425.30 255.29,421.88 255.92,418.15C257.90,406.48 256.18,395.42 258.53,394.50C258.79,394.40 259.83,394.40 261.14,394.40C262.45,394.40 263.30,394.40 263.75,394.40C265.91,394.40 265.33,400.41 266.36,406.51C267.94,415.86 266.68,425.30 268.97,425.30C269.29,425.30 270.28,425.30 271.58,425.30C272.89,425.30 272.89,425.30 274.19,425.30C275.50,425.30 275.50,425.30 276.81,425.30C278.11,425.30 278.11,425.30 279.42,425.30C280.72,425.30 280.72,425.30 282.03,425.30C283.33,425.30 283.33,425.30 284.64,425.30C285.94,425.30 285.94,425.30 287.25,425.30C288.55,425.30 288.55,425.30 289.86,425.30C291.17,425.30 291.17,425.30 292.47,425.30C293.78,425.30 293.78,425.30 295.08,425.30C296.39,425.30 296.45,425.30 297.69,425.11C299.06,424.91 299.00,424.50 300.30,423.88C301.61,423.25 301.54,422.85 302.91,422.62C304.15,422.40 304.22,422.40 305.52,422.40C306.83,422.40 306.83,422.40 308.14,422.40C309.44,422.40 309.44,422.40 310.75,422.40C312.05,422.40 312.05,422.40 313.36,422.40C314.66,422.40 314.66,422.40 315.97,422.40C317.27,422.40 317.27,422.40 318.58,422.40C319.88,422.40 321.07,422.40 321.19,422.40C323.68,422.40 322.27,396.38 323.80,370.38C324.88,352.04 324.43,333.73 326.41,333.73C327.04,333.73 327.33,339.50 329.02,345.01C329.94,348.01 329.79,349.93 331.63,350.74C332.40,351.08 332.96,351.08 334.24,351.08C335.57,351.08 336.53,351.08 336.86,350.34C339.14,345.24 338.31,341.02 339.47,331.65C340.92,319.82 340.38,319.74 342.08,307.96C342.99,301.59 342.70,301.32 344.69,295.34C345.31,293.46 346.31,292.24 347.30,292.24C348.92,292.24 348.38,295.41 349.91,298.34C350.99,300.41 350.84,302.14 352.52,302.24C353.45,302.30 353.83,302.27 355.13,302.30C356.44,302.33 357.31,302.30 357.74,302.36C359.92,302.67 359.77,308.72 360.35,315.27C362.38,337.88 361.62,337.98 362.96,360.67C364.24,382.24 363.75,382.29 365.57,403.81C366.36,413.11 366.03,413.45 368.19,422.31C368.64,424.18 369.24,424.48 370.80,425.26C371.85,425.79 372.10,425.79 373.41,425.79C374.71,425.79 375.29,425.79 376.02,425.25C377.91,423.83 378.48,422.26 378.63,418.79C381.09,360.56 379.29,360.29 381.24,301.85C381.90,282.10 381.54,262.40 383.85,262.40C384.15,262.40 385.27,264.58 386.46,266.88C387.88,269.62 387.64,269.75 389.07,272.48C390.25,274.73 390.13,274.87 391.68,276.85C392.74,278.21 393.82,279.16 394.29,279.16C396.43,279.16 396.36,271.50 396.90,263.68C398.97,234.09 397.04,233.37 399.51,204.35C399.65,202.79 400.74,203.29 402.13,202.52C403.35,201.85 404.03,202.52 404.74,201.47C406.64,198.65 406.06,197.95 407.35,194.42C408.67,190.77 409.59,187.11 409.96,187.11C412.21,187.11 411.53,211.01 412.57,234.93C414.14,271.20 413.54,307.49 415.18,307.49C416.16,307.49 416.81,285.88 417.79,264.25C419.42,228.06 419.64,191.84 420.40,191.84C422.25,191.84 421.05,279.40 423.01,366.92C423.67,396.13 423.12,425.30 425.62,425.30C425.73,425.30 426.93,425.30 428.23,425.30C429.54,425.30 429.54,425.30 430.85,425.30C432.15,425.30 432.15,425.30 433.46,425.30C434.76,425.30 434.76,425.30 436.07,425.30C437.37,425.30 437.37,425.30 438.68,425.30C439.98,425.30 439.98,425.30 441.29,425.30C442.59,425.30 442.59,425.30 443.90,425.30C445.20,425.30 445.25,425.30 446.51,425.30C447.86,425.30 447.97,425.05 449.12,424.31C450.58,423.36 450.23,421.94 451.73,421.92C452.84,421.91 453.04,421.91 454.34,421.91C455.65,421.91 455.65,421.91 456.95,421.92C458.26,421.93 458.26,421.94 459.56,421.95C460.87,421.96 460.87,421.96 462.17,421.97C463.48,421.98 463.48,421.98 464.79,421.99C466.09,422.00 467.34,422.00 467.40,422.00C469.95,422.00 467.86,365.87 470.01,309.85C470.47,297.85 470.86,285.97 472.62,285.97C473.48,285.97 473.37,291.93 475.23,297.41C475.98,299.61 476.16,301.24 477.84,301.34C478.77,301.40 479.15,301.36 480.45,301.40C481.76,301.44 482.98,301.40 483.06,301.50C485.59,304.35 484.05,340.05 485.67,378.57C486.66,401.95 485.81,425.30 488.28,425.30C488.42,425.30 489.59,425.30 490.89,425.30C492.20,425.30 492.20,425.30 493.50,425.30C494.81,425.30 494.81,425.30 496.12,425.30C497.42,425.30 497.42,425.30 498.73,425.30C500.03,425.30 500.03,425.30 501.34,425.30C502.64,425.30 502.64,425.30 503.95,425.30C505.25,425.30 505.25,425.30 506.56,425.30C507.86,425.30 507.86,425.30 509.17,425.30C510.48,425.30 510.48,425.30 511.78,425.30C513.09,425.30 513.09,425.30 514.39,425.30C515.70,425.30 515.70,425.30 517.00,425.30C518.31,425.30 518.31,425.30 519.61,425.30C520.92,425.30 520.92,425.30 522.22,425.30C523.53,425.30 523.53,425.30 524.84,425.30C526.14,425.30 526.14,425.30 527.45,425.30C528.75,425.30 528.75,425.30 530.06,425.30C531.36,425.30 531.36,425.30 532.67,425.30C533.97,425.30 533.97,425.30 535.28,425.30C536.58,425.30 536.58,425.30 537.89,425.30C539.19,425.30 539.19,425.30 540.50,425.30C541.81,425.30 541.81,425.30 543.11,425.30C544.42,425.30 544.42,425.30 545.72,425.30C547.03,425.30 547.03,425.30 548.33,425.30C549.64,425.30 549.64,425.30 550.94,425.30C552.25,425.30 552.25,425.30 553.55,425.30C554.86,425.30 554.86,425.30 556.16,425.30C557.47,425.30 557.47,425.30 558.78,425.30C560.08,425.30 560.08,425.30 561.39,425.30C562.69,425.30 562.69,425.30 564.00,425.30C565.30,425.30 565.30,425.30 566.61,425.30C567.91,425.30 567.91,425.30 569.22,425.30C570.52,425.30 570.52,425.30 571.83,425.30C573.14,425.30 573.14,425.30 574.44,425.30C575.75,425.30 575.75,425.30 577.05,425.30C578.36,425.30 578.36,425.30 579.66,425.30C580.97,425.30 580.97,425.30 582.27,425.30C583.58,425.30 583.58,425.30 584.88,425.30C586.19,425.30 586.19,425.30 587.50,425.30C588.80,425.30 588.80,425.30 590.11,425.30C591.41,425.30 591.41,425.30 592.72,425.30C594.02,425.30 594.02,425.30 595.33,425.30C596.63,425.30 596.63,425.30 597.94,425.30C599.24,425.30 599.24,425.30 600.55,425.30C601.85,425.30 601.85,425.30 603.16,425.30C604.47,425.30 604.47,425.30 605.77,425.30C607.08,425.30 607.08,425.30 608.38,425.30C609.69,425.30 609.69,425.30 610.99,425.30C612.30,425.30 612.30,425.30 613.60,425.30C614.91,425.30 614.91,425.30 616.21,425.30C617.52,425.30 617.52,425.30 618.83,425.30C620.13,425.30 620.13,425.30 621.44,425.30C622.74,425.30 622.74,425.30 624.05,425.30C625.35,425.30 625.35,425.30 626.66,425.30C627.96,425.30 627.96,425.30 629.27,425.30C630.57,425.30 630.57,425.30 631.88,425.30C633.18,425.30 633.18,425.30 634.49,425.30C635.80,425.30 635.80,425.30 637.10,425.30C638.41,425.30 638.41,425.30 639.71,425.30C641.02,425.30 641.02,425.30 642.32,425.30C643.63,425.30 643.63,425.30 644.93,425.30C646.24,425.30 646.24,425.30 647.54,425.30C648.85,425.30 648.85,425.30 650.15,425.30C651.46,425.30 651.46,425.30 652.77,425.30C654.07,425.30 654.07,425.30 655.38,425.30C656.68,425.30 656.68,425.30 657.99,425.30C659.29,425.30 659.29,425.30 660.60,425.30C661.90,425.30 661.90,425.30 663.21,425.30C664.51,425.30 664.51,425.30 665.82,425.30C667.13,425.30 667.13,425.30 668.43,425.30C669.74,425.30 669.74,425.30 671.04,425.30C672.35,425.30 672.35,425.30 673.65,425.30C674.96,425.30 674.96,425.30 676.26,425.30C677.57,425.30 677.57,425.30 678.87,425.30C680.18,425.30 680.18,425.30 681.49,425.30C682.79,425.30 682.79,425.30 684.10,425.30C685.40,425.30 685.40,425.30 686.71,425.30C688.01,425.30 688.01,425.30 689.32,425.30C690.62,425.30 690.62,425.30 691.93,425.30C693.23,425.30 693.23,425.30 694.54,425.30C695.84,425.30 695.84,425.30 697.15,425.30C698.46,425.30 698.46,425.30 699.76,425.30C701.07,425.30 701.07,425.30 702.37,425.30C703.68,425.30 703.68,425.30 704.98,425.30C706.29,425.30 706.29,425.30 707.59,425.30C708.90,425.30 708.90,425.30 710.20,425.30C711.51,425.30 711.51,425.30 712.82,425.30C714.12,425.30 714.12,425.30 715.43,425.30C716.73,425.30 716.73,425.30 718.04,425.30C719.34,425.30 719.34,425.30 720.65,425.30C721.95,425.30 721.95,425.30 723.26,425.30C724.56,425.30 724.56,425.30 725.87,425.30C727.17,425.30 727.17,425.30 728.48,425.30C729.79,425.30 729.79,425.30 731.09,425.30C732.40,425.30 732.40,425.30 733.70,425.30C735.01,425.30 735.01,425.30 736.31,425.30C737.62,425.30 737.62,425.30 738.92,425.30C740.23,425.30 740.23,425.30 741.53,425.30C742.84,425.30 742.84,425.30 744.14,425.30C745.45,425.30 745.45,425.30 746.76,425.30C748.06,425.30 748.06,425.30 749.37,425.30C750.67,425.30 750.67,425.30 751.98,425.30C753.28,425.30 753.28,425.30 754.59,425.30C755.89,425.30 755.89,425.30 757.20,425.30C758.50,425.30 758.50,425.30 759.81,425.30C761.12,425.30 761.12,425.30 762.42,425.30C763.73,425.30 763.73,425.30 765.03,425.30C766.34,425.30 766.34,425.30 767.64,425.30C768.95,425.30 768.95,425.30 770.25,425.30C771.56,425.30 771.56,425.30 772.86,425.30C774.17,425.30 774.17,425.30 775.47,425.30C776.78,425.30 776.78,425.30 778.09,425.30C779.39,425.30 779.39,425.30 780.70,425.30C782.00,425.30 782.00,425.30 783.31,425.30C784.61,425.30 784.61,425.30 785.92,425.30C787.22,425.30 787.22,425.30 788.53,425.30C789.83,425.30 789.83,425.30 791.14,425.30C792.45,425.30 792.45,425.30 793.75,425.30C795.06,425.30 795.06,425.30 796.36,425.30C797.67,425.30 797.67,425.30 798.97,425.30C800.28,425.30 800.28,425.30 801.58,425.30C802.89,425.30 802.89,425.30 804.19,425.30C805.50,425.30 805.50,425.30 806.81,425.30C808.11,425.30 808.11,425.30 809.42,425.30C810.72,425.30 810.72,425.30 812.03,425.30C813.33,425.30 813.33,425.30 814.64,425.30C815.94,425.30 815.94,425.30 817.25,425.30C818.55,425.30 818.55,425.30 819.86,425.30C821.16,425.30 821.16,425.30 822.47,425.30C823.78,425.30 823.78,425.30 825.08,425.30C826.39,425.30 826.39,425.30 827.69,425.30C829.00,425.30 829.00,425.30 830.30,425.30C831.61,425.30 831.61,425.30 832.91,425.30C834.22,425.30 834.22,425.30 835.52,425.30C836.83,425.30 836.83,425.30 838.13,425.30C839.44,425.30 839.44,425.30 840.75,425.30C842.05,425.30 842.05,425.30 843.36,425.30C844.66,425.30 844.66,425.30 845.97,425.30C847.27,425.30 847.27,425.30 848.58,425.30C849.88,425.30 849.88,425.30 851.19,425.30C852.49,425.30 852.49,425.30 853.80,425.30C855.11,425.30 855.11,425.30 856.41,425.30C857.72,425.30 857.72,425.30 859.02,425.30C860.33,425.30 860.33,425.30 861.63,425.30C862.94,425.30 862.94,425.30 864.24,425.30C865.55,425.30 865.55,425.30 866.85,425.30C868.16,425.30 868.16,425.30 869.46,425.30C870.77,425.30 870.77,425.30 872.08,425.30C873.38,425.30 873.38,425.30 874.69,425.30C875.99,425.30 875.99,425.30 877.30,425.30C878.60,425.30 879.83,425.30 879.91,425.30C882.44,425.30 881.48,385.52 882.52,345.72C884.09,285.98 882.63,285.64 885.13,226.23C885.24,223.63 886.00,221.71 887.74,221.71C888.61,221.71 889.05,221.72 890.35,221.75C891.66,221.78 891.68,221.75 892.96,221.83C894.29,221.91 894.54,221.83 895.57,222.57C897.15,223.71 896.81,224.25 898.18,225.81C899.42,227.21 899.27,227.86 900.80,228.50C901.88,228.95 902.09,228.80 903.41,228.95C904.70,229.10 904.72,228.98 906.02,229.12C907.33,229.25 908.13,229.12 908.63,229.50C910.75,231.15 911.06,234.88 911.24,240.54C913.68,320.01 911.60,320.21 913.85,399.77C914.21,412.59 914.09,425.30 916.46,425.30C916.70,425.30 917.77,425.30 919.07,425.30C920.38,425.30 920.38,425.30 921.68,425.30C922.99,425.30 922.99,425.30 924.29,425.30C925.60,425.30 925.60,425.30 926.90,425.30C928.21,425.30 928.21,425.30 929.51,425.30C930.82,425.30 931.99,425.30 932.12,425.30C934.60,425.30 934.05,401.16 934.74,376.98C936.66,308.96 934.95,308.81 937.35,240.88C937.57,234.67 937.80,228.70 939.96,228.70C940.41,228.70 941.26,228.70 942.57,228.70C943.87,228.70 944.94,228.70 945.18,228.70C947.55,228.70 947.41,241.57 947.79,254.54C950.02,330.11 948.09,330.24 950.40,405.78C950.70,415.62 950.71,425.30 953.01,425.30C953.32,425.30 954.32,425.30 955.62,425.30C956.93,425.30 956.93,425.30 958.23,425.30C959.54,425.30 959.54,425.30 960.84,425.30C962.15,425.30 963.45,425.30 963.45,425.30" fill="none" stroke="#7e84f0" stroke-width="1.45" stroke-linejoin="round"/>
<circle cx="404.6" cy="179.4" r="2.1" fill="#fff" stroke="#90ed7d" stroke-width="1.15"/>
<circle cx="404.6" cy="181.4" r="2.1" fill="#fff" stroke="#f7a35c" stroke-width="1.15"/>
<circle cx="404.6" cy="201.4" r="2.1" fill="#fff" stroke="#7e84f0" stroke-width="1.15"/>
<text transform="translate(177.2,280.5) rotate(-90)" text-anchor="middle" font-size="7.4" fill="#4e9cf0" class="cjk">流量</text>
<line x1="487.2" x2="503.2" y1="450" y2="450" stroke="#90ed7d" stroke-width="1.2"/>
<circle cx="495.2" cy="450" r="3.3" fill="#fff" stroke="#90ed7d" stroke-width="1.1"/>
<text x="506.3" y="452.9" font-size="8" fill="#333" class="cjk">总流量</text>
<line x1="537.1" x2="553.1" y1="450" y2="450" stroke="#f7a35c" stroke-width="1.2"/>
<circle cx="545.1" cy="450" r="3.3" fill="#fff" stroke="#f7a35c" stroke-width="1.1"/>
<text x="556.2" y="452.9" font-size="8" fill="#333" class="cjk"><tspan textLength="12.6" lengthAdjust="spacingAndGlyphs">SSL</tspan>流量</text>
<line x1="592.1" x2="608.1" y1="450" y2="450" stroke="#7e84f0" stroke-width="1.2"/>
<circle cx="600.1" cy="450" r="3.3" fill="#fff" stroke="#7e84f0" stroke-width="1.1"/>
<text x="611.5" y="452.9" font-size="8" fill="#333" class="cjk"><tspan textLength="12.6" lengthAdjust="spacingAndGlyphs">SSL</tspan>解密流量</text>
</svg>

<!-- tooltip -->
<div id="tip" class="abs">
  <div class="d">2025-08-21 17:20:00</div>
  <div class="r" style="top:19.2px"><span class="dot" style="background:#90ed7d"></span><span class="l">总流量</span><span class="v">15.28Gbps</span></div>
  <div class="r" style="top:34.8px"><span class="dot" style="background:#f7a35c"></span><span class="l"><span class="lat">SSL</span>流量</span><span class="v">15.16Gbps</span></div>
  <div class="r" style="top:50.5px"><span class="dot" style="background:#8085e9"></span><span class="l"><span class="lat">SSL</span>解密流量</span><span class="v">13.92Gbps</span></div>
</div>

</div></div>

<!-- floating widgets outside the page -->
<svg class="abs" style="left:980.5px;top:317px" width="20" height="63" viewBox="0 0 20 63">
  <defs><linearGradient id="yg" x1="0" y1="0" x2="1" y2="1"><stop offset="0" stop-color="#fee98f"/><stop offset="1" stop-color="#fbd75e"/></linearGradient></defs>
  <path d="M0,0.8 A34,34 0 0 1 0,61.2 Z" fill="url(#yg)"/>
</svg>
<svg class="abs" style="left:980.5px;top:410px" width="16" height="20" viewBox="0 0 16 20"><path d="M0,1.2 L14.7,18.4 H0 Z" fill="#f6f8fe"/></svg>
</body>
</html>
